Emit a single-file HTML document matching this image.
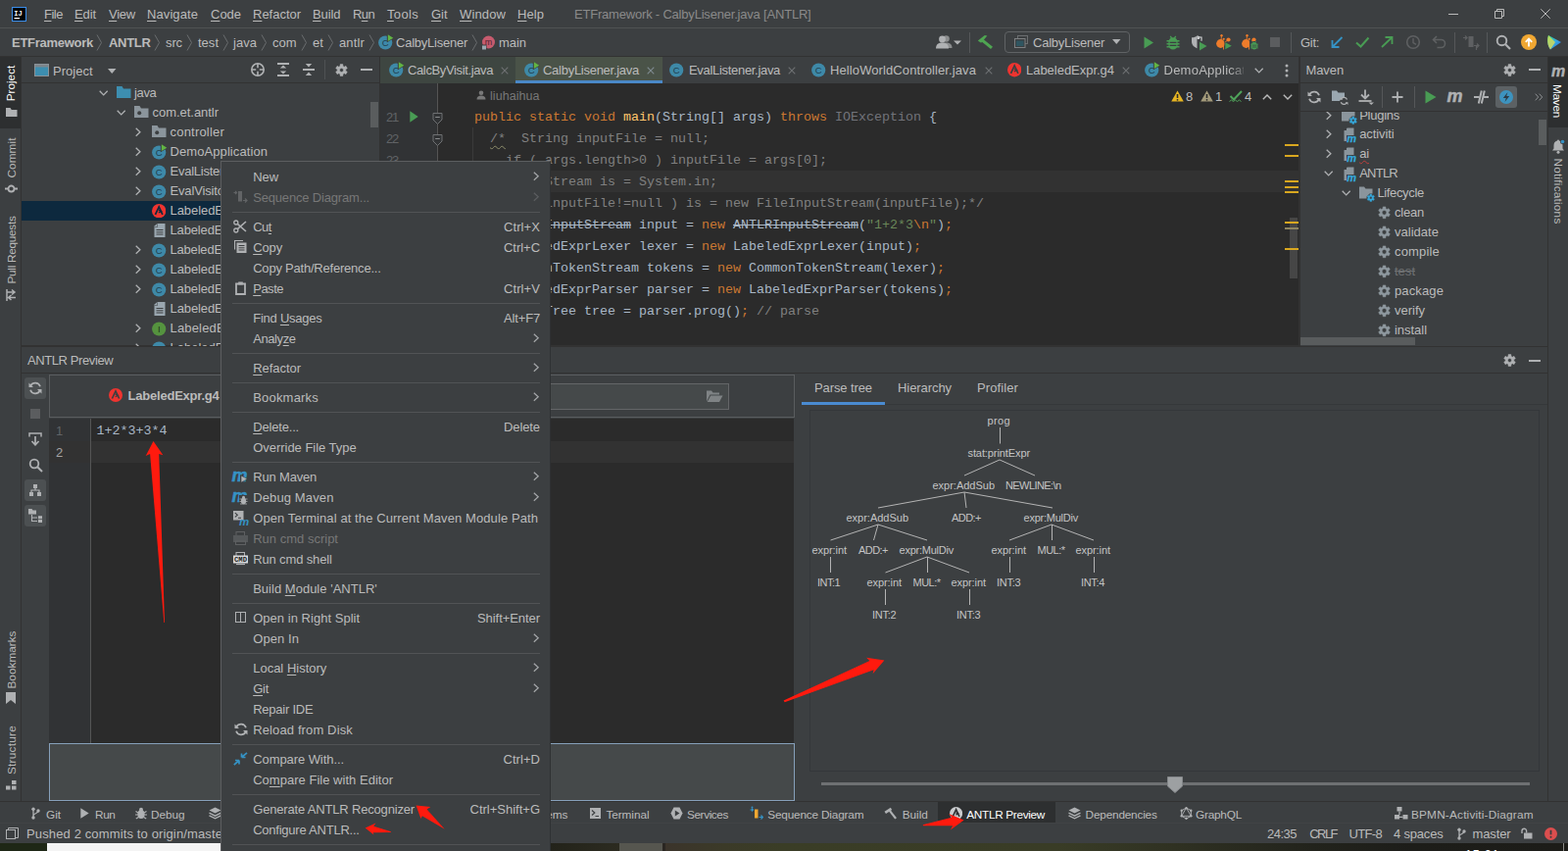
<!DOCTYPE html>
<html><head><meta charset="utf-8"><title>ETFramework - CalbyLisener.java [ANTLR]</title>
<style>
html,body{margin:0;padding:0;}
body{width:1600px;height:868px;overflow:hidden;position:relative;background:#3c3f41;font-family:"Liberation Sans",sans-serif;font-size:13px;color:#bbb;}
body div,body span,body svg{position:absolute;display:block;}
body span{white-space:pre;line-height:20px;height:20px;}
body span u{text-decoration:underline;text-underline-offset:2px;text-decoration-thickness:1px;}
body span s{text-decoration:line-through;}
body span i{font-style:normal;position:static;}
</style></head><body>
<div style="left:0px;top:0px;width:1600px;height:860px;background:#3c3f41;"></div>
<div style="left:0px;top:860px;width:1600px;height:8px;background:#2a2d22;"></div>
<div style="left:96px;top:862px;width:358px;height:6px;background:#f2f2f2;"></div>
<div style="left:454px;top:862px;width:1146px;height:6px;background:#3a3b30;"></div>
<div style="left:0px;top:28px;width:1600px;height:1px;background:#505253;"></div>
<div style="left:0px;top:57px;width:1600px;height:1px;background:#323232;"></div>
<div style="left:0px;top:58px;width:22px;height:759px;background:#3c3f41;"></div>
<div style="left:0px;top:58px;width:22px;height:73px;background:#2d2f30;"></div>
<div style="left:21px;top:58px;width:1px;height:759px;background:#323232;"></div>
<div style="left:1578px;top:58px;width:1px;height:759px;background:#323232;"></div>
<div style="left:1579px;top:58px;width:21px;height:64px;background:#2d2f30;"></div>
<div style="left:387px;top:58px;width:1px;height:295px;background:#323232;"></div>
<div style="left:1325px;top:58px;width:2px;height:295px;background:#323232;"></div>
<div style="left:22px;top:84px;width:366px;height:1px;background:#323232;"></div>
<div style="left:1327px;top:84px;width:251px;height:1px;background:#323232;"></div>
<div style="left:388px;top:58px;width:937px;height:27px;background:#3c3f41;"></div>
<div style="left:388px;top:85px;width:937px;height:268px;background:#2b2b2b;"></div>
<div style="left:388px;top:85px;width:59px;height:268px;background:#313335;"></div>
<div style="left:446px;top:85px;width:1px;height:268px;background:#555555;"></div>
<div style="left:22px;top:352px;width:1557px;height:1px;background:#323232;"></div>
<svg style="left:12px;top:7px;" width="15" height="15" viewBox="0 0 15 15"><rect x="0.5" y="0.5" width="14" height="14" fill="#000" stroke="#3b8eea" stroke-width="1"/><text x="2.2" y="8.8" font-size="7.5" font-weight="bold" fill="#fff" font-family="Liberation Mono,monospace" textLength="8.5" lengthAdjust="spacingAndGlyphs">IJ</text><rect x="2.5" y="11" width="5.5" height="1.3" fill="#fff"/></svg>
<span style="left:45px;top:4.5px;font-size:13px;color:#bbb;letter-spacing:-0.487px;"><u>F</u>ile</span>
<span style="left:76px;top:4.5px;font-size:13px;color:#bbb;letter-spacing:-0.100px;"><u>E</u>dit</span>
<span style="left:111px;top:4.5px;font-size:13px;color:#bbb;letter-spacing:-0.235px;"><u>V</u>iew</span>
<span style="left:150px;top:4.5px;font-size:13px;color:#bbb;letter-spacing:0.087px;"><u>N</u>avigate</span>
<span style="left:215px;top:4.5px;font-size:13px;color:#bbb;letter-spacing:-0.019px;"><u>C</u>ode</span>
<span style="left:258px;top:4.5px;font-size:13px;color:#bbb;letter-spacing:-0.016px;"><u>R</u>efactor</span>
<span style="left:319px;top:4.5px;font-size:13px;color:#bbb;letter-spacing:-0.081px;"><u>B</u>uild</span>
<span style="left:360px;top:4.5px;font-size:13px;color:#bbb;letter-spacing:-0.616px;">R<u>u</u>n</span>
<span style="left:395px;top:4.5px;font-size:13px;color:#bbb;letter-spacing:0.331px;"><u>T</u>ools</span>
<span style="left:440px;top:4.5px;font-size:13px;color:#bbb;letter-spacing:-0.037px;"><u>G</u>it</span>
<span style="left:469px;top:4.5px;font-size:13px;color:#bbb;letter-spacing:0.127px;"><u>W</u>indow</span>
<span style="left:528px;top:4.5px;font-size:13px;color:#bbb;letter-spacing:0.066px;"><u>H</u>elp</span>
<span style="left:586px;top:4.5px;font-size:13px;color:#8a8a8a;letter-spacing:-0.198px;">ETFramework - CalbyLisener.java [ANTLR]</span>
<div style="left:1478px;top:14px;width:10px;height:1px;background:#bbb;"></div>
<svg style="left:1525px;top:9px;" width="10" height="10" viewBox="0 0 10 10"><path d="M0.5 2.5h7v7h-7z M2.5 2.5v-2h7v7h-2" fill="none" stroke="#bbb" stroke-width="1"/></svg>
<svg style="left:1572px;top:9px;" width="10" height="10" viewBox="0 0 10 10"><path d="M0.3 0.3l9.400 9.400M9.700 0.300l-9.400 9.400" fill="none" stroke="#bbb" stroke-width="1"/></svg>
<span style="left:12px;top:33.5px;font-size:13px;color:#bbb;font-weight:bold;letter-spacing:-0.270px;">ETFramework</span>
<span style="left:111px;top:33.5px;font-size:13px;color:#bbb;font-weight:bold;letter-spacing:-0.309px;">ANTLR</span>
<span style="left:169px;top:33.5px;font-size:13px;color:#bbb;letter-spacing:-0.110px;">src</span>
<span style="left:202px;top:33.5px;font-size:13px;color:#bbb;letter-spacing:0.012px;">test</span>
<span style="left:238px;top:33.5px;font-size:13px;color:#bbb;letter-spacing:0.038px;">java</span>
<span style="left:278px;top:33.5px;font-size:13px;color:#bbb;letter-spacing:-0.019px;">com</span>
<span style="left:319px;top:33.5px;font-size:13px;color:#bbb;letter-spacing:0.080px;">et</span>
<span style="left:346px;top:33.5px;font-size:13px;color:#bbb;letter-spacing:0.143px;">antlr</span>
<svg style="left:98px;top:34px;" width="7" height="19" viewBox="0 0 7 19"><path d="M1 1.5L5.5 9.5L1 17.5" fill="none" stroke="#6a6d6f" stroke-width="1"/></svg>
<svg style="left:157px;top:34px;" width="7" height="19" viewBox="0 0 7 19"><path d="M1 1.5L5.5 9.5L1 17.5" fill="none" stroke="#6a6d6f" stroke-width="1"/></svg>
<svg style="left:190px;top:34px;" width="7" height="19" viewBox="0 0 7 19"><path d="M1 1.5L5.5 9.5L1 17.5" fill="none" stroke="#6a6d6f" stroke-width="1"/></svg>
<svg style="left:227px;top:34px;" width="7" height="19" viewBox="0 0 7 19"><path d="M1 1.5L5.5 9.5L1 17.5" fill="none" stroke="#6a6d6f" stroke-width="1"/></svg>
<svg style="left:266px;top:34px;" width="7" height="19" viewBox="0 0 7 19"><path d="M1 1.5L5.5 9.5L1 17.5" fill="none" stroke="#6a6d6f" stroke-width="1"/></svg>
<svg style="left:307px;top:34px;" width="7" height="19" viewBox="0 0 7 19"><path d="M1 1.5L5.5 9.5L1 17.5" fill="none" stroke="#6a6d6f" stroke-width="1"/></svg>
<svg style="left:334px;top:34px;" width="7" height="19" viewBox="0 0 7 19"><path d="M1 1.5L5.5 9.5L1 17.5" fill="none" stroke="#6a6d6f" stroke-width="1"/></svg>
<svg style="left:376px;top:34px;" width="7" height="19" viewBox="0 0 7 19"><path d="M1 1.5L5.5 9.5L1 17.5" fill="none" stroke="#6a6d6f" stroke-width="1"/></svg>
<svg style="left:481px;top:34px;" width="7" height="19" viewBox="0 0 7 19"><path d="M1 1.5L5.5 9.5L1 17.5" fill="none" stroke="#6a6d6f" stroke-width="1"/></svg>
<svg style="left:385.8px;top:35px;" width="16" height="16" viewBox="0 0 16 16"><circle cx="7.200" cy="8.500" r="7.100" fill="#3e89a8"/><text x="7.200" y="11.700" font-size="9.500" text-anchor="middle" fill="#21404f" font-family="Liberation Sans,sans-serif">C</text><path d="M8.800 0L16 4L8.800 8.200z" fill="#3c3f41"/><path d="M9.800 0.300L15.300 3.700L9.800 7z" fill="#62b543"/></svg>
<span style="left:404px;top:33.5px;font-size:13px;color:#bbb;letter-spacing:-0.239px;">CalbyLisener</span>
<svg style="left:491px;top:36px;" width="15" height="15" viewBox="0 0 15 15"><circle cx="7.5" cy="7" r="6.5" fill="#c75b6e"/><text x="7.5" y="10" font-size="9" text-anchor="middle" fill="#4e2530" font-family="Liberation Sans,sans-serif">m</text><rect x="0" y="9.5" width="5.5" height="5.5" fill="#3c3f41"/><rect x="1" y="10.5" width="4" height="4" fill="#9aa7b0"/></svg>
<span style="left:509px;top:33.5px;font-size:13px;color:#bbb;letter-spacing:-0.044px;">main</span>
<svg style="left:955px;top:35px;" width="28" height="16" viewBox="0 0 28 16"><circle cx="10.5" cy="4.5" r="3.3" fill="#8b8d8e"/><path d="M4.5 14c0-4 2.5-5.5 6-5.5s6 1.500 6 5.5z" fill="#8b8d8e"/><circle cx="6.500" cy="5" r="3.400" fill="#afb1b3"/><path d="M0 14.500c0-4.500 3-6 6.500-6s6.500 1.500 6.500 6z" fill="#afb1b3"/><path d="M18 6.500h8l-4 4z" fill="#afb1b3"/></svg>
<div style="left:989px;top:33px;width:1px;height:21px;background:#555759;"></div>
<svg style="left:997px;top:35px;" width="18" height="17" viewBox="0 0 18 17"><path d="M0.800 6.600L7.800 1L10.400 1.600L4.100 8.750z" fill="#4fa552"/><path d="M5.500 4.250L16 12.700L14 15L4.100 7z" fill="#4fa552"/></svg>
<div style="left:1025px;top:32px;width:126px;height:20px;border:1px solid #606365;border-radius:4px;"></div>
<svg style="left:1035px;top:36px;" width="14" height="13" viewBox="0 0 14 13"><rect x="3.500" y="0.500" width="10" height="8" fill="none" stroke="#6b6e70"/><rect x="0.500" y="3.500" width="10.500" height="9" fill="#3c3f41" stroke="#7d8082"/><rect x="2" y="5.500" width="7.500" height="5.500" fill="#2f5560"/></svg>
<span style="left:1054px;top:33.5px;font-size:13px;color:#bbb;letter-spacing:-0.239px;">CalbyLisener</span>
<svg style="left:1135px;top:40px;" width="9" height="6" viewBox="0 0 9 6"><path d="M0 0h8.500l-4.250 5z" fill="#afb1b3"/></svg>
<svg style="left:1166.5px;top:36.5px;" width="11" height="13" viewBox="0 0 11 13"><path d="M0.500 0.500L10 6.500L0.500 12.500z" fill="#499c54"/></svg>
<svg style="left:1190px;top:35.5px;" width="14" height="16" viewBox="0 0 14 16"><g transform="translate(0,0) scale(1.0)"><path d="M4.200 1L5.800 3.200M9.800 1L8.200 3.200" stroke="#499c54" stroke-width="1.300" fill="none"/><path d="M0.500 5.800h13M0.500 8.800h13M0.500 11.800h13" stroke="#499c54" stroke-width="1.400" fill="none"/><path d="M7 2.200c3 0 4.600 2 4.600 5v2.500c0 3-2 4.800-4.600 4.800s-4.600-1.800-4.600-4.800v-2.500c0-3 1.600-5 4.600-5z" fill="#499c54"/><path d="M3.600 7.300h6.800M3.600 10.300h6.800" stroke="#3c3f41" stroke-width="1.200" fill="none"/></g></svg>
<svg style="left:1215px;top:36px;" width="18" height="17" viewBox="0 0 18 17"><path d="M1 2.200c2.500 0 4.200-0.600 5.500-1.500v12.500c-3-1.200-5.500-3.300-5.500-6.700z" fill="#b0b2b4"/><path d="M6.500 0.700c1.300 0.900 3 1.500 4.500 1.500v3.500" fill="none" stroke="#c8cacc" stroke-width="1.200"/><path d="M6.500 0.700v3.300h2.500v-2.300z" fill="#c8cacc"/><path d="M9 6.800L16.500 11L9 15.500z" fill="#499c54"/></svg>
<svg style="left:1240px;top:34px;" width="18" height="18" viewBox="0 0 18 18"><circle cx="5.500" cy="10.500" r="4.400" fill="#ee7c2b"/><circle cx="13.500" cy="6.500" r="2.100" fill="#ee7c2b"/><circle cx="8.700" cy="5.800" r="1.100" fill="#ee7c2b"/><circle cx="6.500" cy="2.300" r="1.200" fill="#ee7c2b"/><path d="M6.500 2.300L6 7M8.500 13v3.500M13.500 6.500L10 9" stroke="#ee7c2b" stroke-width="0.900" fill="none"/><path d="M9.500 8.300L17.500 12.600L9.500 17z" fill="#3c3f41"/><path d="M10.300 9.300L16.800 12.700L10.300 16.200z" fill="#499c54"/></svg>
<svg style="left:1266px;top:34px;" width="18" height="18" viewBox="0 0 18 18"><circle cx="5.500" cy="10.500" r="4.400" fill="#ee7c2b"/><circle cx="13.500" cy="6.500" r="2.100" fill="#ee7c2b"/><circle cx="8.700" cy="5.800" r="1.100" fill="#ee7c2b"/><circle cx="6.500" cy="2.300" r="1.200" fill="#ee7c2b"/><path d="M6.500 2.300L6 7M8.500 13v3.500M13.500 6.500L10 9" stroke="#ee7c2b" stroke-width="0.900" fill="none"/><rect x="9" y="8" width="9" height="10" fill="#3c3f41"/><g transform="translate(9.5,7.6) scale(0.62)"><path d="M4.200 1L5.800 3.200M9.800 1L8.200 3.200" stroke="#499c54" stroke-width="1.300" fill="none"/><path d="M0.500 5.800h13M0.500 8.800h13M0.500 11.800h13" stroke="#499c54" stroke-width="1.400" fill="none"/><path d="M7 2.200c3 0 4.600 2 4.600 5v2.500c0 3-2 4.800-4.600 4.800s-4.600-1.800-4.600-4.800v-2.500c0-3 1.600-5 4.600-5z" fill="#499c54"/><path d="M3.600 7.300h6.800M3.600 10.300h6.800" stroke="#3c3f41" stroke-width="1.200" fill="none"/></g></svg>
<div style="left:1296px;top:38px;width:10px;height:10px;background:#5b5d5f;"></div>
<div style="left:1317px;top:33px;width:1px;height:21px;background:#555759;"></div>
<span style="left:1327px;top:33.5px;font-size:13px;color:#bbb;letter-spacing:-0.306px;">Git:</span>
<svg style="left:1358px;top:37px;" width="13" height="12" viewBox="0 0 13 12"><path d="M11.500 1L2 10.500M1.500 4v7h7" fill="none" stroke="#3592c4" stroke-width="1.800"/></svg>
<svg style="left:1383px;top:37px;" width="15" height="12" viewBox="0 0 15 12"><path d="M1 6.500L5.500 10.500L13.500 1.500" fill="none" stroke="#499c54" stroke-width="2"/></svg>
<svg style="left:1409px;top:37px;" width="13" height="12" viewBox="0 0 13 12"><path d="M1 11L11 1.500M4.500 1h7v7" fill="none" stroke="#499c54" stroke-width="1.800"/></svg>
<svg style="left:1434px;top:35px;" width="16" height="16" viewBox="0 0 16 16"><circle cx="8" cy="8" r="6.300" fill="none" stroke="#5e6062" stroke-width="1.600"/><path d="M8 4v4.500l3 1.800" fill="none" stroke="#5e6062" stroke-width="1.400"/></svg>
<svg style="left:1461px;top:36px;" width="15" height="14" viewBox="0 0 15 14"><path d="M5 1L1.500 4.500L5 8M2 4.500h7.500a4 4 0 0 1 0 8h-4" fill="none" stroke="#5e6062" stroke-width="1.600"/></svg>
<div style="left:1484px;top:33px;width:1px;height:21px;background:#555759;"></div>
<svg style="left:1493px;top:35px;" width="18" height="17" viewBox="0 0 18 17"><rect x="5.500" y="2" width="5" height="11" fill="#5e6062"/><path d="M0 3.500h3.500M2 1.500l2 2l-2 2M11 11.500h5M14 9.500l2 2l-2 2M13.500 12v4" stroke="#5e6062" stroke-width="1.200" fill="none"/></svg>
<div style="left:1517px;top:33px;width:1px;height:21px;background:#555759;"></div>
<svg style="left:1526px;top:35px;" width="16" height="16" viewBox="0 0 16 16"><circle cx="6.500" cy="6.500" r="4.800" fill="none" stroke="#afb1b3" stroke-width="1.900"/><path d="M10 10l5 5" stroke="#afb1b3" stroke-width="2.200"/></svg>
<svg style="left:1552px;top:35px;" width="16" height="16" viewBox="0 0 16 16"><circle cx="8" cy="8" r="8" fill="#f0a732"/><path d="M8 12.500V5M4.800 7.800L8 4.500l3.200 3.300" fill="none" stroke="#fff" stroke-width="1.800"/></svg>
<svg style="left:1578px;top:35px;" width="16" height="16" viewBox="0 0 16 16"><defs><linearGradient id="sp" x1="0" y1="0" x2="1" y2="1"><stop offset="0" stop-color="#21d789"/><stop offset="0.500" stop-color="#36a9e0"/><stop offset="1" stop-color="#2b6be0"/></linearGradient></defs><path d="M2 1L15 8L4 15.500C1 12 0.500 5 2 1z" fill="url(#sp)"/><path d="M2 1L9 8L4 15.500C1 12 0.500 5 2 1z" fill="#e7e04a" opacity=".75"/></svg>
<span style="left:-6.75px;top:75.25px;width:36.5px;text-align:center;font-size:11.8px;color:#ffffff;letter-spacing:-0.032px;transform:rotate(-90deg);">Project</span>
<svg style="left:6px;top:110px;" width="12" height="9" viewBox="0 0 12 9"><path d="M0 0h4.500l1.300 2h5.700v7h-11.500z" fill="#afb1b3"/></svg>
<span style="left:-9.0px;top:150.5px;width:41px;text-align:center;font-size:11.8px;color:#bbb;letter-spacing:0.060px;transform:rotate(-90deg);">Commit</span>
<svg style="left:4px;top:186px;transform:rotate(90deg);" width="15" height="13" viewBox="0 0 15 13"><circle cx="7.500" cy="6.500" r="3" fill="none" stroke="#afb1b3" stroke-width="1.800"/><path d="M7.500 0v3.500M7.500 9.500v3.500" stroke="#afb1b3" stroke-width="1.800"/></svg>
<span style="left:-23.0px;top:244.5px;width:69px;text-align:center;font-size:11.8px;color:#bbb;letter-spacing:-0.292px;transform:rotate(-90deg);">Pull Requests</span>
<svg style="left:5px;top:293.5px;" width="13" height="14" viewBox="0 0 13 14"><path d="M2 1v12M2 4h8M7 1.500l3 2.500l-3 2.500M11 9.500h-7M6.500 7l-3 2.500l3 2.500" fill="none" stroke="#afb1b3" stroke-width="1.500"/></svg>
<span style="left:-18.0px;top:662.5px;width:59px;text-align:center;font-size:11.8px;color:#bbb;letter-spacing:-0.002px;transform:rotate(-90deg);">Bookmarks</span>
<svg style="left:6px;top:706px;" width="10" height="12" viewBox="0 0 10 12"><path d="M0 0h10v12l-5-4l-5 4z" fill="#afb1b3"/></svg>
<span style="left:-13.5px;top:755.0px;width:50px;text-align:center;font-size:11.8px;color:#bbb;letter-spacing:0.237px;transform:rotate(-90deg);">Structure</span>
<svg style="left:6px;top:795.5px;" width="11" height="10" viewBox="0 0 11 10"><rect x="6" y="0" width="4.500" height="4" fill="#afb1b3"/><rect x="0" y="5.500" width="4.500" height="4" fill="#afb1b3"/><rect x="6" y="5.500" width="4.500" height="4" fill="#afb1b3"/></svg>
<svg style="left:35px;top:65px;" width="15" height="13" viewBox="0 0 15 13"><rect x="0.500" y="0.500" width="14" height="12" fill="#3d8eb0" stroke="#8a9298" stroke-width="1"/><rect x="1" y="1" width="13" height="2.500" fill="#7d858b"/></svg>
<span style="left:54px;top:62.5px;font-size:13px;color:#bbb;letter-spacing:0.006px;">Project</span>
<svg style="left:110px;top:70px;" width="9" height="6" viewBox="0 0 9 6"><path d="M0 0h8.500l-4.250 5z" fill="#afb1b3"/></svg>
<svg style="left:256px;top:64px;" width="15" height="15" viewBox="0 0 15 15"><circle cx="7" cy="7" r="6.200" fill="none" stroke="#afb1b3" stroke-width="1.600"/><path d="M7 0.800v4.400M7 8.800v4.400M0.800 7h4.400M8.800 7h4.400" stroke="#afb1b3" stroke-width="1.600"/></svg>
<svg style="left:283px;top:64px;" width="12" height="14" viewBox="0 0 12 14"><path d="M0 1h12M0 13h12" stroke="#afb1b3" stroke-width="2"/><path d="M6 2.600L9.200 5.600H2.800zM6 11.400L9.200 8.400H2.800z" fill="#afb1b3"/></svg>
<svg style="left:309px;top:64px;" width="12" height="14" viewBox="0 0 12 14"><path d="M0 7h12" stroke="#afb1b3" stroke-width="2"/><path d="M6 4.400L9.200 1H2.800zM6 9.600L9.200 13H2.800z" fill="#afb1b3"/></svg>
<div style="left:331px;top:61px;width:1px;height:20px;background:#4f5153;"></div>
<svg style="left:341.5px;top:64.5px;" width="13" height="13" viewBox="0 0 15 15"><path d="M5.79 2.80L5.93 0.68L9.07 0.68L9.21 2.80L10.71 3.67L12.62 2.73L14.19 5.45L12.42 6.63L12.42 8.37L14.19 9.55L12.62 12.27L10.71 11.33L9.21 12.20L9.07 14.32L5.93 14.32L5.79 12.20L4.29 11.33L2.38 12.27L0.81 9.55L2.58 8.37L2.58 6.63L0.81 5.45L2.38 2.73L4.29 3.67z M5.20 7.50a2.3 2.3 0 1 0 4.6 0a2.3 2.3 0 1 0 -4.6 0z" fill="#afb1b3" fill-rule="evenodd" stroke="#afb1b3" stroke-width="0.6" stroke-linejoin="round"/></svg>
<div style="left:368px;top:70px;width:12px;height:2px;background:#afb1b3;"></div>
<div style="left:22px;top:205px;width:365px;height:20px;background:#0d293e;"></div>
<svg style="left:100.8px;top:91.75px;" width="10" height="6" viewBox="0 0 10 6"><path d="M0.700 0.700L4.700 4.900L8.700 0.700" fill="none" stroke="#afb1b3" stroke-width="1.300"/></svg>
<svg style="left:119px;top:88px;" width="15" height="12" viewBox="0 0 15 12"><path d="M0 0h5.500l1.500 2.500h7.500v9.500h-14.500z" fill="#3d8eb0"/></svg>
<span style="left:137px;top:85.0px;font-size:13px;color:#bbb;letter-spacing:-0.337px;">java</span>
<svg style="left:118.8px;top:111.75px;" width="10" height="6" viewBox="0 0 10 6"><path d="M0.700 0.700L4.700 4.900L8.700 0.700" fill="none" stroke="#afb1b3" stroke-width="1.300"/></svg>
<svg style="left:137px;top:108px;" width="15" height="12" viewBox="0 0 15 12"><path d="M0 0h5.500l1.500 2.500h7.500v9.500h-14.500z" fill="#8b959c"/><circle cx="5.200" cy="7.300" r="2" fill="#3c3f41"/></svg>
<span style="left:155.5px;top:105.0px;font-size:13px;color:#bbb;letter-spacing:-0.034px;">com.et.antlr</span>
<svg style="left:138.25px;top:129.8px;" width="6" height="10" viewBox="0 0 6 10"><path d="M0.700 0.700L4.900 4.700L0.700 8.700" fill="none" stroke="#afb1b3" stroke-width="1.300"/></svg>
<svg style="left:155px;top:128px;" width="15" height="12" viewBox="0 0 15 12"><path d="M0 0h5.500l1.500 2.500h7.500v9.500h-14.500z" fill="#8b959c"/><circle cx="5.200" cy="7.300" r="2" fill="#3c3f41"/></svg>
<span style="left:173.5px;top:125.0px;font-size:13px;color:#bbb;letter-spacing:0.204px;">controller</span>
<svg style="left:138.25px;top:149.8px;" width="6" height="10" viewBox="0 0 6 10"><path d="M0.700 0.700L4.900 4.700L0.700 8.700" fill="none" stroke="#afb1b3" stroke-width="1.300"/></svg>
<svg style="left:154.8px;top:146.5px;" width="16" height="16" viewBox="0 0 16 16"><circle cx="7.200" cy="8.500" r="7.100" fill="#3e89a8"/><text x="7.200" y="11.700" font-size="9.500" text-anchor="middle" fill="#21404f" font-family="Liberation Sans,sans-serif">C</text><path d="M8.800 0L16 4L8.800 8.200z" fill="#3c3f41"/><path d="M9.800 0.300L15.300 3.700L9.800 7z" fill="#62b543"/></svg>
<span style="left:173.5px;top:145.0px;font-size:13px;color:#bbb;letter-spacing:0.082px;">DemoApplication</span>
<svg style="left:138.25px;top:169.8px;" width="6" height="10" viewBox="0 0 6 10"><path d="M0.700 0.700L4.900 4.700L0.700 8.700" fill="none" stroke="#afb1b3" stroke-width="1.300"/></svg>
<svg style="left:154.8px;top:166.5px;" width="16" height="16" viewBox="0 0 16 16"><circle cx="7.200" cy="8.500" r="7.100" fill="#3e89a8"/><text x="7.200" y="11.700" font-size="9.500" text-anchor="middle" fill="#21404f" font-family="Liberation Sans,sans-serif">C</text></svg>
<span style="left:173.5px;top:165.0px;font-size:13px;color:#bbb;letter-spacing:-0.253px;">EvalListener</span>
<svg style="left:138.25px;top:189.8px;" width="6" height="10" viewBox="0 0 6 10"><path d="M0.700 0.700L4.900 4.700L0.700 8.700" fill="none" stroke="#afb1b3" stroke-width="1.300"/></svg>
<svg style="left:154.8px;top:186.5px;" width="16" height="16" viewBox="0 0 16 16"><circle cx="7.200" cy="8.500" r="7.100" fill="#3e89a8"/><text x="7.200" y="11.700" font-size="9.500" text-anchor="middle" fill="#21404f" font-family="Liberation Sans,sans-serif">C</text></svg>
<span style="left:173.5px;top:185.0px;font-size:13px;color:#bbb;letter-spacing:-0.152px;">EvalVisitor</span>
<svg style="left:154.7px;top:207.9px;" width="14.4" height="14.4" viewBox="0 0 14.4 14.4"><circle cx="7.2" cy="7.2" r="7.2" fill="#ee3430"/><path d="M3.50 10.80L7.20 2.90L10.90 10.80" fill="none" stroke="#0d293e" stroke-width="1.70" stroke-linejoin="miter"/><path d="M6.90 6.30L9.50 7.50L6.90 9.00" fill="none" stroke="#0d293e" stroke-width="1.30"/></svg>
<span style="left:173.5px;top:205.0px;font-size:13px;color:#bbb;letter-spacing:-0.060px;">LabeledExpr.g4</span>
<svg style="left:157px;top:227.5px;" width="12" height="14" viewBox="0 0 12 14"><path d="M4 0h7.500v14h-11v-10.500z" fill="#9aa7b0"/><path d="M0.500 3.500L4 0v3.500z" fill="#3c3f41"/><path d="M0 3L3.500 0v3z" fill="#9aa7b0"/><path d="M2.500 6.500h7M2.500 8.800h7M2.500 11h7" stroke="#3c3f41" stroke-width="1"/></svg>
<span style="left:173.5px;top:225.0px;font-size:13px;color:#bbb;letter-spacing:-0.149px;">LabeledExpr.tokens</span>
<svg style="left:138.25px;top:249.8px;" width="6" height="10" viewBox="0 0 6 10"><path d="M0.700 0.700L4.900 4.700L0.700 8.700" fill="none" stroke="#afb1b3" stroke-width="1.300"/></svg>
<svg style="left:154.8px;top:246.5px;" width="16" height="16" viewBox="0 0 16 16"><circle cx="7.200" cy="8.500" r="7.100" fill="#3e89a8"/><text x="7.200" y="11.700" font-size="9.500" text-anchor="middle" fill="#21404f" font-family="Liberation Sans,sans-serif">C</text></svg>
<span style="left:173.5px;top:245.0px;font-size:13px;color:#bbb;letter-spacing:-0.190px;">LabeledExprBaseListener</span>
<svg style="left:138.25px;top:269.8px;" width="6" height="10" viewBox="0 0 6 10"><path d="M0.700 0.700L4.900 4.700L0.700 8.700" fill="none" stroke="#afb1b3" stroke-width="1.300"/></svg>
<svg style="left:154.8px;top:266.5px;" width="16" height="16" viewBox="0 0 16 16"><circle cx="7.200" cy="8.500" r="7.100" fill="#3e89a8"/><text x="7.200" y="11.700" font-size="9.500" text-anchor="middle" fill="#21404f" font-family="Liberation Sans,sans-serif">C</text></svg>
<span style="left:173.5px;top:265.0px;font-size:13px;color:#bbb;letter-spacing:-0.091px;">LabeledExprBaseVisitor</span>
<svg style="left:138.25px;top:289.8px;" width="6" height="10" viewBox="0 0 6 10"><path d="M0.700 0.700L4.900 4.700L0.700 8.700" fill="none" stroke="#afb1b3" stroke-width="1.300"/></svg>
<svg style="left:154.8px;top:286.5px;" width="16" height="16" viewBox="0 0 16 16"><circle cx="7.200" cy="8.500" r="7.100" fill="#3e89a8"/><text x="7.200" y="11.700" font-size="9.500" text-anchor="middle" fill="#21404f" font-family="Liberation Sans,sans-serif">C</text></svg>
<span style="left:173.5px;top:285.0px;font-size:13px;color:#bbb;letter-spacing:-0.126px;">LabeledExprLexer</span>
<svg style="left:157px;top:307.5px;" width="12" height="14" viewBox="0 0 12 14"><path d="M4 0h7.500v14h-11v-10.500z" fill="#9aa7b0"/><path d="M0.500 3.500L4 0v3.500z" fill="#3c3f41"/><path d="M0 3L3.500 0v3z" fill="#9aa7b0"/><path d="M2.500 6.500h7M2.500 8.800h7M2.500 11h7" stroke="#3c3f41" stroke-width="1"/></svg>
<span style="left:173.5px;top:305.0px;font-size:13px;color:#bbb;letter-spacing:-0.096px;">LabeledExprLexer.tokens</span>
<svg style="left:138.25px;top:329.8px;" width="6" height="10" viewBox="0 0 6 10"><path d="M0.700 0.700L4.900 4.700L0.700 8.700" fill="none" stroke="#afb1b3" stroke-width="1.300"/></svg>
<svg style="left:154.8px;top:326.5px;" width="16" height="16" viewBox="0 0 16 16"><circle cx="7.200" cy="8.500" r="7.100" fill="#55933f"/><text x="7.200" y="11.700" font-size="9.500" text-anchor="middle" fill="#21381a" font-family="Liberation Sans,sans-serif">I</text></svg>
<span style="left:173.5px;top:325.0px;font-size:13px;color:#bbb;letter-spacing:0.172px;">LabeledExprListener</span>
<svg style="left:138.25px;top:349.8px;" width="6" height="10" viewBox="0 0 6 10"><path d="M0.700 0.700L4.900 4.700L0.700 8.700" fill="none" stroke="#afb1b3" stroke-width="1.300"/></svg>
<svg style="left:154.8px;top:346.5px;" width="16" height="16" viewBox="0 0 16 16"><circle cx="7.200" cy="8.500" r="7.100" fill="#3e89a8"/><text x="7.200" y="11.700" font-size="9.500" text-anchor="middle" fill="#21404f" font-family="Liberation Sans,sans-serif">C</text></svg>
<span style="left:173.5px;top:345.0px;font-size:13px;color:#bbb;letter-spacing:0.013px;">LabeledExprParser</span>
<div style="left:378px;top:104px;width:8px;height:26px;background:#5a5d5e;"></div>
<div style="left:388px;top:58px;width:937px;height:27px;background:#3c3f41;"></div>
<div style="left:388px;top:58px;width:138px;height:27px;background:#3e4641;"></div>
<div style="left:526px;top:58px;width:150px;height:27px;background:#4a5348;"></div>
<div style="left:526px;top:82px;width:150px;height:3px;background:#4a88c7;"></div>
<svg style="left:396.8px;top:63px;" width="16" height="16" viewBox="0 0 16 16"><circle cx="7.200" cy="8.500" r="7.100" fill="#3e89a8"/><text x="7.200" y="11.700" font-size="9.500" text-anchor="middle" fill="#21404f" font-family="Liberation Sans,sans-serif">C</text><path d="M8.800 0L16 4L8.800 8.200z" fill="#3c3f41"/><path d="M9.800 0.300L15.300 3.700L9.800 7z" fill="#62b543"/></svg>
<span style="left:416px;top:62.0px;font-size:13px;color:#bbb;letter-spacing:-0.373px;">CalcByVisit.java</span>
<svg style="left:511px;top:68px;" width="8" height="8" viewBox="0 0 8 8"><path d="M0.700 0.700l6.600 6.600M7.300 0.700l-6.600 6.600" stroke="#6e7173" stroke-width="1.100" fill="none"/></svg>
<svg style="left:534.8px;top:63px;" width="16" height="16" viewBox="0 0 16 16"><circle cx="7.200" cy="8.500" r="7.100" fill="#3e89a8"/><text x="7.200" y="11.700" font-size="9.500" text-anchor="middle" fill="#21404f" font-family="Liberation Sans,sans-serif">C</text><path d="M8.800 0L16 4L8.800 8.200z" fill="#3c3f41"/><path d="M9.800 0.300L15.300 3.700L9.800 7z" fill="#62b543"/></svg>
<span style="left:554px;top:62.0px;font-size:13px;color:#bbb;letter-spacing:-0.271px;">CalbyLisener.java</span>
<svg style="left:660px;top:68px;" width="8" height="8" viewBox="0 0 8 8"><path d="M0.700 0.700l6.600 6.600M7.300 0.700l-6.600 6.600" stroke="#7f8b91" stroke-width="1.100" fill="none"/></svg>
<svg style="left:682.8px;top:63px;" width="16" height="16" viewBox="0 0 16 16"><circle cx="7.200" cy="8.500" r="7.100" fill="#3e89a8"/><text x="7.200" y="11.700" font-size="9.500" text-anchor="middle" fill="#21404f" font-family="Liberation Sans,sans-serif">C</text></svg>
<span style="left:703px;top:62.0px;font-size:13px;color:#bbb;letter-spacing:-0.310px;">EvalListener.java</span>
<svg style="left:804px;top:68px;" width="8" height="8" viewBox="0 0 8 8"><path d="M0.700 0.700l6.600 6.600M7.300 0.700l-6.600 6.600" stroke="#6e7173" stroke-width="1.100" fill="none"/></svg>
<svg style="left:827.8px;top:63px;" width="16" height="16" viewBox="0 0 16 16"><circle cx="7.200" cy="8.500" r="7.100" fill="#3e89a8"/><text x="7.200" y="11.700" font-size="9.500" text-anchor="middle" fill="#21404f" font-family="Liberation Sans,sans-serif">C</text></svg>
<span style="left:847px;top:62.0px;font-size:13px;color:#bbb;letter-spacing:0.103px;">HelloWorldController.java</span>
<svg style="left:1005px;top:68px;" width="8" height="8" viewBox="0 0 8 8"><path d="M0.700 0.700l6.600 6.600M7.300 0.700l-6.600 6.600" stroke="#6e7173" stroke-width="1.100" fill="none"/></svg>
<svg style="left:1027.5px;top:64.3px;" width="14.4" height="14.4" viewBox="0 0 14.4 14.4"><circle cx="7.2" cy="7.2" r="7.2" fill="#ee3430"/><path d="M3.50 10.80L7.20 2.90L10.90 10.80" fill="none" stroke="#3c3f41" stroke-width="1.70" stroke-linejoin="miter"/><path d="M6.90 6.30L9.50 7.50L6.90 9.00" fill="none" stroke="#3c3f41" stroke-width="1.30"/></svg>
<span style="left:1047px;top:62.0px;font-size:13px;color:#bbb;letter-spacing:-0.025px;">LabeledExpr.g4</span>
<svg style="left:1145px;top:68px;" width="8" height="8" viewBox="0 0 8 8"><path d="M0.700 0.700l6.600 6.600M7.300 0.700l-6.600 6.600" stroke="#6e7173" stroke-width="1.100" fill="none"/></svg>
<svg style="left:1167.8px;top:63px;" width="16" height="16" viewBox="0 0 16 16"><circle cx="7.200" cy="8.500" r="7.100" fill="#3e89a8"/><text x="7.200" y="11.700" font-size="9.500" text-anchor="middle" fill="#21404f" font-family="Liberation Sans,sans-serif">C</text><path d="M8.800 0L16 4L8.800 8.200z" fill="#3c3f41"/><path d="M9.800 0.300L15.300 3.700L9.800 7z" fill="#62b543"/></svg>
<span style="left:1187.5px;top:62px;font-size:13px;color:#bbb;width:81px;overflow:hidden;letter-spacing:0.25px;-webkit-mask-image:linear-gradient(90deg,#000 82%,rgba(0,0,0,.3) 100%);mask-image:linear-gradient(90deg,#000 82%,rgba(0,0,0,.3) 100%);">DemoApplication.java</span>
<svg style="left:1280.3px;top:69.25px;" width="10" height="6" viewBox="0 0 10 6"><path d="M0.700 0.700L4.700 4.900L8.700 0.700" fill="none" stroke="#afb1b3" stroke-width="1.300"/></svg>
<svg style="left:1311px;top:65px;" width="4" height="14" viewBox="0 0 4 14"><circle cx="2" cy="2" r="1.500" fill="#afb1b3"/><circle cx="2" cy="7" r="1.500" fill="#afb1b3"/><circle cx="2" cy="12" r="1.500" fill="#afb1b3"/></svg>
<div style="left:447px;top:174px;width:878px;height:22px;background:#323232;"></div>
<div style="left:388px;top:174px;width:59px;height:22px;background:#323232;"></div>
<div style="left:446px;top:85px;width:1px;height:268px;background:#555555;"></div>
<div style="left:482px;top:130px;width:1px;height:223px;background:#3a3a3a;"></div>
<svg style="left:486px;top:92px;" width="10" height="10" viewBox="0 0 10 10"><circle cx="5" cy="2.800" r="2.300" fill="#787878"/><path d="M0.500 9.500c0-3 2-4 4.500-4s4.500 1 4.500 4z" fill="#787878"/></svg>
<span style="left:500px;top:88.0px;font-size:12.5px;color:#787878;letter-spacing:0.051px;">liuhaihua</span>
<span style="left:484px;top:109.5px;font-size:13.333px;color:#a9b7c6;font-family:'Liberation Mono',monospace;"><i style="color:#cc7832">public static void </i><i style="color:#ffc66d">main</i>(String[] args) <i style="color:#cc7832">throws </i><i style="color:#72737a">IOException</i> {</span>
<span style="left:484px;top:131.5px;font-size:13.333px;color:#808080;font-family:'Liberation Mono',monospace;">  <i style="text-decoration:underline wavy #8c8c6a 1px;text-underline-offset:3px;">/*</i>  String inputFile = null;</span>
<span style="left:484px;top:153.5px;font-size:13.333px;color:#808080;font-family:'Liberation Mono',monospace;">    if ( args.length&gt;0 ) inputFile = args[0];</span>
<span style="left:484px;top:175.5px;font-size:13.333px;color:#808080;font-family:'Liberation Mono',monospace;">    InputStream is = System.in;</span>
<span style="left:484px;top:197.5px;font-size:13.333px;color:#808080;font-family:'Liberation Mono',monospace;">    if ( inputFile!=null ) is = new FileInputStream(inputFile);*/</span>
<span style="left:484px;top:219.5px;font-size:13.333px;color:#a9b7c6;font-family:'Liberation Mono',monospace;">    <s>ANTLRInputStream</s> input = <i style="color:#cc7832">new </i><s>ANTLRInputStream</s>(<i style="color:#6a8759">"1+2*3</i><i style="color:#cc7832">\n</i><i style="color:#6a8759">"</i>)<i style="color:#cc7832">;</i></span>
<span style="left:484px;top:241.5px;font-size:13.333px;color:#a9b7c6;font-family:'Liberation Mono',monospace;">    LabeledExprLexer lexer = <i style="color:#cc7832">new </i>LabeledExprLexer(input)<i style="color:#cc7832">;</i></span>
<span style="left:484px;top:263.5px;font-size:13.333px;color:#a9b7c6;font-family:'Liberation Mono',monospace;">    CommonTokenStream tokens = <i style="color:#cc7832">new </i>CommonTokenStream(lexer)<i style="color:#cc7832">;</i></span>
<span style="left:484px;top:285.5px;font-size:13.333px;color:#a9b7c6;font-family:'Liberation Mono',monospace;">    LabeledExprParser parser = <i style="color:#cc7832">new </i>LabeledExprParser(tokens)<i style="color:#cc7832">;</i></span>
<span style="left:484px;top:307.5px;font-size:13.333px;color:#a9b7c6;font-family:'Liberation Mono',monospace;">    ParseTree tree = parser.prog()<i style="color:#cc7832">;</i><i style="color:#808080"> // parse</i></span>
<span style="left:394px;top:109.5px;font-size:13px;color:#606366;letter-spacing:-1.302px;font-family:"Liberation Mono",monospace;">21</span>
<span style="left:394px;top:131.5px;font-size:13px;color:#606366;letter-spacing:-1.302px;font-family:"Liberation Mono",monospace;">22</span>
<span style="left:394px;top:153.5px;font-size:13px;color:#606366;letter-spacing:-1.302px;font-family:"Liberation Mono",monospace;">23</span>
<svg style="left:418px;top:113px;" width="9" height="12" viewBox="0 0 9 12"><path d="M0.300 0.300L8.700 6L0.300 11.700z" fill="#499c54"/></svg>
<svg style="left:441px;top:114.5px;" width="11" height="12" viewBox="0 0 11 12"><path d="M1 0.500h9v6.500l-4.500 4.500l-4.500-4.500z" fill="#313335" stroke="#6f7173" stroke-width="1"/><path d="M3.200 4.500h4.600" stroke="#8a8c8e" stroke-width="1"/></svg>
<svg style="left:441px;top:136.5px;" width="11" height="12" viewBox="0 0 11 12"><path d="M1 0.500h9v6.500l-4.500 4.500l-4.500-4.500z" fill="#313335" stroke="#6f7173" stroke-width="1"/><path d="M3.200 4.500h4.600" stroke="#8a8c8e" stroke-width="1"/></svg>
<svg style="left:1195px;top:92px;" width="13" height="12" viewBox="0 0 13 12"><path d="M6.500 0.500L12.800 11.500H0.200z" fill="#e6b422"/><path d="M6.500 4v4" stroke="#2b2b2b" stroke-width="1.600"/><circle cx="6.500" cy="9.800" r="0.900" fill="#2b2b2b"/></svg>
<span style="left:1210px;top:88.5px;font-size:13px;color:#bbb;letter-spacing:0.271px;">8</span>
<svg style="left:1225px;top:92px;" width="13" height="12" viewBox="0 0 13 12"><path d="M6.500 0.500L12.800 11.500H0.200z" fill="#a39a7a"/><path d="M6.500 4v4" stroke="#2b2b2b" stroke-width="1.600"/><circle cx="6.500" cy="9.800" r="0.900" fill="#2b2b2b"/></svg>
<span style="left:1240px;top:88.5px;font-size:13px;color:#bbb;letter-spacing:-0.229px;">1</span>
<svg style="left:1254px;top:92px;" width="15" height="13" viewBox="0 0 15 13"><path d="M1.500 6L5 9.500L13 1" fill="none" stroke="#4fa35a" stroke-width="2"/><path d="M0.500 11.500l2-1.500l2 1.500l2-1.500l2 1.500l2-1.500l2 1.500" fill="none" stroke="#4fa35a" stroke-width="1"/></svg>
<span style="left:1270px;top:88.5px;font-size:13px;color:#bbb;letter-spacing:0.271px;">4</span>
<svg style="left:1287.5px;top:95.5px;" width="10" height="6" viewBox="0 0 10 6"><path d="M0.800 5.200L5 1L9.200 5.200" fill="none" stroke="#bbb" stroke-width="1.400"/></svg>
<svg style="left:1308.5px;top:95.5px;" width="10" height="6" viewBox="0 0 10 6"><path d="M0.800 0.800L5 5L9.200 0.800" fill="none" stroke="#bbb" stroke-width="1.400"/></svg>
<div style="left:1311px;top:147px;width:14px;height:2px;background:#d9a720;"></div>
<div style="left:1311px;top:158px;width:14px;height:2px;background:#d9a720;"></div>
<div style="left:1311px;top:184px;width:14px;height:2px;background:#d9a720;"></div>
<div style="left:1311px;top:189.5px;width:14px;height:2px;background:#d9a720;"></div>
<div style="left:1311px;top:195px;width:14px;height:2px;background:#d9a720;"></div>
<div style="left:1316px;top:222px;width:8px;height:62px;background:rgba(120,120,120,.35);"></div>
<div style="left:1311px;top:226px;width:14px;height:2px;background:#d9a720;"></div>
<div style="left:1311px;top:232px;width:14px;height:2px;background:#8d8461;"></div>
<div style="left:1311px;top:253px;width:14px;height:2px;background:#d9a720;"></div>
<div style="left:1327px;top:58px;width:252px;height:294px;background:#3c3f41;"></div>
<div style="left:1327px;top:84px;width:252px;height:1px;background:#323232;"></div>
<div style="left:1327px;top:113px;width:252px;height:1px;background:#323232;"></div>
<div style="left:1325px;top:58px;width:2px;height:295px;background:#323232;"></div>
<span style="left:1332.5px;top:62.0px;font-size:13px;color:#bbb;letter-spacing:-0.103px;">Maven</span>
<svg style="left:1533.5px;top:64.5px;" width="13" height="13" viewBox="0 0 15 15"><path d="M5.79 2.80L5.93 0.68L9.07 0.68L9.21 2.80L10.71 3.67L12.62 2.73L14.19 5.45L12.42 6.63L12.42 8.37L14.19 9.55L12.62 12.27L10.71 11.33L9.21 12.20L9.07 14.32L5.93 14.32L5.79 12.20L4.29 11.33L2.38 12.27L0.81 9.55L2.58 8.37L2.58 6.63L0.81 5.45L2.38 2.73L4.29 3.67z M5.20 7.50a2.3 2.3 0 1 0 4.6 0a2.3 2.3 0 1 0 -4.6 0z" fill="#afb1b3" fill-rule="evenodd" stroke="#afb1b3" stroke-width="0.6" stroke-linejoin="round"/></svg>
<div style="left:1560px;top:70px;width:12px;height:2px;background:#afb1b3;"></div>
<svg style="left:1353.25px;top:112.8px;" width="6" height="10" viewBox="0 0 6 10"><path d="M0.700 0.700L4.900 4.700L0.700 8.700" fill="none" stroke="#afb1b3" stroke-width="1.300"/></svg>
<svg style="left:1369px;top:110.5px;" width="16" height="16" viewBox="0 0 16 16"><path d="M0 0.500h5l1.500 2h7v5h-3l-3 3v2h-7.500z" fill="#8b959c"/><g transform="translate(7.600,7.600) scale(0.56)"><path d="M5.79 2.80L5.93 0.68L9.07 0.68L9.21 2.80L10.71 3.67L12.62 2.73L14.19 5.45L12.42 6.63L12.42 8.37L14.19 9.55L12.62 12.27L10.71 11.33L9.21 12.20L9.07 14.32L5.93 14.32L5.79 12.20L4.29 11.33L2.38 12.27L0.81 9.55L2.58 8.37L2.58 6.63L0.81 5.45L2.38 2.73L4.29 3.67z M5.20 7.50a2.3 2.3 0 1 0 4.6 0a2.3 2.3 0 1 0 -4.6 0z" fill="#35a7da" fill-rule="evenodd" stroke="#35a7da" stroke-width="0.6" stroke-linejoin="round"/></g></svg>
<span style="left:1387.2px;top:108.0px;font-size:13px;color:#bbb;letter-spacing:-0.262px;">Plugins</span>
<div style="left:1327px;top:85px;width:252px;height:28px;background:#3c3f41;"></div>
<div style="left:1327px;top:113px;width:252px;height:1px;background:#323232;"></div>
<svg style="left:1334px;top:92px;" width="14" height="14" viewBox="0 0 14 14"><path d="M12 5.200A5.300 5.300 0 0 0 2.300 4.500M2 8.800A5.300 5.300 0 0 0 11.700 9.500" fill="none" stroke="#afb1b3" stroke-width="1.700"/><path d="M0.500 1.500v4.500h4.500zM13.500 12.500v-4.500h-4.500z" fill="#afb1b3"/></svg>
<svg style="left:1359px;top:92px;" width="17" height="15" viewBox="0 0 17 15"><path d="M0 0.500h5l1.500 2h6.500v5.500a5 5 0 0 0-5 3h-8z" fill="#9aa7b0"/><path d="M15.500 9.500a3.300 3.300 0 0 0-6 -0.500M9.300 12.200a3.300 3.300 0 0 0 6 0.500" fill="none" stroke="#afb1b3" stroke-width="1.300"/><path d="M8.500 7v2.800h2.800zM16.500 15v-2.800h-2.800z" fill="#afb1b3"/></svg>
<svg style="left:1386px;top:91px;" width="16" height="16" viewBox="0 0 16 16"><path d="M7 0.500v8M3 5.500L7 9.500L11 5.500" fill="none" stroke="#afb1b3" stroke-width="1.800"/><path d="M0.500 12h13" stroke="#afb1b3" stroke-width="1.800"/><path d="M10.500 13.500h5.500l-2.750 2.500z" fill="#afb1b3"/></svg>
<div style="left:1409.5px;top:88px;width:1px;height:22px;background:#555759;"></div>
<svg style="left:1420px;top:93px;" width="12" height="12" viewBox="0 0 12 12"><path d="M6 0.500v11M0.500 6h11" stroke="#afb1b3" stroke-width="1.800"/></svg>
<div style="left:1442.5px;top:88px;width:1px;height:22px;background:#555759;"></div>
<svg style="left:1454px;top:92px;" width="12" height="14" viewBox="0 0 12 14"><path d="M0.500 0.500L11.500 7L0.500 13.500z" fill="#499c54"/></svg>
<span style="left:1476.5px;top:87.700px;font-size:18px;font-weight:bold;font-style:italic;color:#afb1b3;line-height:20px;letter-spacing:-0.5px;-webkit-text-stroke:0.5px #afb1b3;">m</span>
<svg style="left:1504px;top:92px;" width="15" height="14" viewBox="0 0 15 14"><path d="M0 7h5.500M9.500 7h5.500" stroke="#afb1b3" stroke-width="2.200"/><path d="M4.800 13.500L7.800 0.500M7.800 13.500L10.800 0.500" stroke="#afb1b3" stroke-width="2"/></svg>
<div style="left:1526px;top:88px;width:22px;height:22px;background:#5c6164;border-radius:3px;"></div>
<svg style="left:1530px;top:92px;" width="14" height="14" viewBox="0 0 14 14"><circle cx="7" cy="7" r="7" fill="#3d93bf"/><path d="M8.500 2L3.800 8h3L5.500 12L10.200 6h-3z" fill="#2d3b45"/></svg>
<svg style="left:1566px;top:95px;" width="9" height="8" viewBox="0 0 9 8"><path d="M0.700 0.700L3.700 4L0.700 7.300M4.700 0.700L7.700 4L4.700 7.300" fill="none" stroke="#8c8e90" stroke-width="1"/></svg>
<svg style="left:1353.25px;top:132.10000000000002px;" width="6" height="10" viewBox="0 0 6 10"><path d="M0.700 0.700L4.900 4.700L0.700 8.700" fill="none" stroke="#afb1b3" stroke-width="1.300"/></svg>
<svg style="left:1370.5px;top:129.8px;" width="14" height="16" viewBox="0 0 14 16"><path d="M3.500 0.500h7v13.500h-10v-10.500z" fill="#8b959c"/><path d="M0.500 3L3 0.500v2.500z" fill="#3c3f41"/><path d="M0.200 3.200L3.200 0.200" stroke="#3c3f41" stroke-width="0.800"/><path d="M5 2.500h3v4.500h-3z" fill="#3c3f41" opacity="0"/><rect x="3" y="8" width="11" height="8" fill="#3c3f41"/><path d="M6.200 0.500h1.200v7.500h-1.200z" fill="#3c3f41" opacity=".0"/><text x="3.300" y="14.800" font-size="11" font-weight="bold" font-style="italic" fill="#35a7da" stroke="#35a7da" stroke-width="0.300" font-family="Liberation Sans,sans-serif">m</text></svg>
<span style="left:1387.2px;top:127.30000000000001px;font-size:13px;color:#bbb;letter-spacing:-0.102px;">activiti</span>
<svg style="left:1353.25px;top:152.10000000000002px;" width="6" height="10" viewBox="0 0 6 10"><path d="M0.700 0.700L4.900 4.700L0.700 8.700" fill="none" stroke="#afb1b3" stroke-width="1.300"/></svg>
<svg style="left:1370.5px;top:149.8px;" width="14" height="16" viewBox="0 0 14 16"><path d="M3.500 0.500h7v13.500h-10v-10.500z" fill="#8b959c"/><path d="M0.500 3L3 0.500v2.500z" fill="#3c3f41"/><path d="M0.200 3.200L3.200 0.200" stroke="#3c3f41" stroke-width="0.800"/><path d="M5 2.500h3v4.500h-3z" fill="#3c3f41" opacity="0"/><rect x="3" y="8" width="11" height="8" fill="#3c3f41"/><path d="M6.200 0.500h1.200v7.500h-1.200z" fill="#3c3f41" opacity=".0"/><text x="3.300" y="14.800" font-size="11" font-weight="bold" font-style="italic" fill="#35a7da" stroke="#35a7da" stroke-width="0.300" font-family="Liberation Sans,sans-serif">m</text></svg>
<span style="left:1387.2px;top:147.3px;font-size:13px;color:#bbb;letter-spacing:-0.159px;text-decoration:underline wavy #bc3f3c 1px;text-underline-offset:2px;">ai</span>
<svg style="left:1351.3px;top:174.05px;" width="10" height="6" viewBox="0 0 10 6"><path d="M0.700 0.700L4.700 4.900L8.700 0.700" fill="none" stroke="#afb1b3" stroke-width="1.300"/></svg>
<svg style="left:1370.5px;top:169.8px;" width="14" height="16" viewBox="0 0 14 16"><path d="M3.500 0.500h7v13.500h-10v-10.500z" fill="#8b959c"/><path d="M0.500 3L3 0.500v2.500z" fill="#3c3f41"/><path d="M0.200 3.200L3.200 0.200" stroke="#3c3f41" stroke-width="0.800"/><path d="M5 2.500h3v4.500h-3z" fill="#3c3f41" opacity="0"/><rect x="3" y="8" width="11" height="8" fill="#3c3f41"/><path d="M6.200 0.500h1.200v7.500h-1.200z" fill="#3c3f41" opacity=".0"/><text x="3.300" y="14.800" font-size="11" font-weight="bold" font-style="italic" fill="#35a7da" stroke="#35a7da" stroke-width="0.300" font-family="Liberation Sans,sans-serif">m</text></svg>
<span style="left:1387.2px;top:167.3px;font-size:13px;color:#bbb;letter-spacing:-0.764px;">ANTLR</span>
<svg style="left:1369.3px;top:194.05px;" width="10" height="6" viewBox="0 0 10 6"><path d="M0.700 0.700L4.700 4.900L8.700 0.700" fill="none" stroke="#afb1b3" stroke-width="1.300"/></svg>
<svg style="left:1387px;top:189.8px;" width="16" height="16" viewBox="0 0 16 16"><path d="M0 0.500h5l1.500 2h7v5h-3l-3 3v2h-7.500z" fill="#8b959c"/><g transform="translate(7.600,7.600) scale(0.56)"><path d="M5.79 2.80L5.93 0.68L9.07 0.68L9.21 2.80L10.71 3.67L12.62 2.73L14.19 5.45L12.42 6.63L12.42 8.37L14.19 9.55L12.62 12.27L10.71 11.33L9.21 12.20L9.07 14.32L5.93 14.32L5.79 12.20L4.29 11.33L2.38 12.27L0.81 9.55L2.58 8.37L2.58 6.63L0.81 5.45L2.38 2.73L4.29 3.67z M5.20 7.50a2.3 2.3 0 1 0 4.6 0a2.3 2.3 0 1 0 -4.6 0z" fill="#35a7da" fill-rule="evenodd" stroke="#35a7da" stroke-width="0.6" stroke-linejoin="round"/></g></svg>
<span style="left:1405.4px;top:187.3px;font-size:13px;color:#bbb;letter-spacing:-0.353px;">Lifecycle</span>
<svg style="left:1405.5px;top:209.8px;" width="13.5" height="14" viewBox="0 0 13.5 14"><g transform="translate(0,0.300) scale(0.870)"><path d="M5.79 2.80L5.93 0.68L9.07 0.68L9.21 2.80L10.71 3.67L12.62 2.73L14.19 5.45L12.42 6.63L12.42 8.37L14.19 9.55L12.62 12.27L10.71 11.33L9.21 12.20L9.07 14.32L5.93 14.32L5.79 12.20L4.29 11.33L2.38 12.27L0.81 9.55L2.58 8.37L2.58 6.63L0.81 5.45L2.38 2.73L4.29 3.67z M4.80 7.50a2.7 2.7 0 1 0 5.4 0a2.7 2.7 0 1 0 -5.4 0z" fill="#8e989f" fill-rule="evenodd" stroke="#8e989f" stroke-width="0.6" stroke-linejoin="round"/></g></svg>
<span style="left:1423px;top:207.3px;font-size:13px;color:#bbb;letter-spacing:-0.215px;">clean</span>
<svg style="left:1405.5px;top:229.8px;" width="13.5" height="14" viewBox="0 0 13.5 14"><g transform="translate(0,0.300) scale(0.870)"><path d="M5.79 2.80L5.93 0.68L9.07 0.68L9.21 2.80L10.71 3.67L12.62 2.73L14.19 5.45L12.42 6.63L12.42 8.37L14.19 9.55L12.62 12.27L10.71 11.33L9.21 12.20L9.07 14.32L5.93 14.32L5.79 12.20L4.29 11.33L2.38 12.27L0.81 9.55L2.58 8.37L2.58 6.63L0.81 5.45L2.38 2.73L4.29 3.67z M4.80 7.50a2.7 2.7 0 1 0 5.4 0a2.7 2.7 0 1 0 -5.4 0z" fill="#8e989f" fill-rule="evenodd" stroke="#8e989f" stroke-width="0.6" stroke-linejoin="round"/></g></svg>
<span style="left:1423px;top:227.3px;font-size:13px;color:#bbb;letter-spacing:0.024px;">validate</span>
<svg style="left:1405.5px;top:249.8px;" width="13.5" height="14" viewBox="0 0 13.5 14"><g transform="translate(0,0.300) scale(0.870)"><path d="M5.79 2.80L5.93 0.68L9.07 0.68L9.21 2.80L10.71 3.67L12.62 2.73L14.19 5.45L12.42 6.63L12.42 8.37L14.19 9.55L12.62 12.27L10.71 11.33L9.21 12.20L9.07 14.32L5.93 14.32L5.79 12.20L4.29 11.33L2.38 12.27L0.81 9.55L2.58 8.37L2.58 6.63L0.81 5.45L2.38 2.73L4.29 3.67z M4.80 7.50a2.7 2.7 0 1 0 5.4 0a2.7 2.7 0 1 0 -5.4 0z" fill="#8e989f" fill-rule="evenodd" stroke="#8e989f" stroke-width="0.6" stroke-linejoin="round"/></g></svg>
<span style="left:1423px;top:247.3px;font-size:13px;color:#bbb;letter-spacing:0.172px;">compile</span>
<svg style="left:1405.5px;top:269.8px;" width="13.5" height="14" viewBox="0 0 13.5 14"><g transform="translate(0,0.300) scale(0.870)"><path d="M5.79 2.80L5.93 0.68L9.07 0.68L9.21 2.80L10.71 3.67L12.62 2.73L14.19 5.45L12.42 6.63L12.42 8.37L14.19 9.55L12.62 12.27L10.71 11.33L9.21 12.20L9.07 14.32L5.93 14.32L5.79 12.20L4.29 11.33L2.38 12.27L0.81 9.55L2.58 8.37L2.58 6.63L0.81 5.45L2.38 2.73L4.29 3.67z M4.80 7.50a2.7 2.7 0 1 0 5.4 0a2.7 2.7 0 1 0 -5.4 0z" fill="#8e989f" fill-rule="evenodd" stroke="#8e989f" stroke-width="0.6" stroke-linejoin="round"/></g></svg>
<span style="left:1423px;top:267.3px;font-size:13px;color:#6e7072;letter-spacing:0.012px;"><s>test</s></span>
<svg style="left:1405.5px;top:289.8px;" width="13.5" height="14" viewBox="0 0 13.5 14"><g transform="translate(0,0.300) scale(0.870)"><path d="M5.79 2.80L5.93 0.68L9.07 0.68L9.21 2.80L10.71 3.67L12.62 2.73L14.19 5.45L12.42 6.63L12.42 8.37L14.19 9.55L12.62 12.27L10.71 11.33L9.21 12.20L9.07 14.32L5.93 14.32L5.79 12.20L4.29 11.33L2.38 12.27L0.81 9.55L2.58 8.37L2.58 6.63L0.81 5.45L2.38 2.73L4.29 3.67z M4.80 7.50a2.7 2.7 0 1 0 5.4 0a2.7 2.7 0 1 0 -5.4 0z" fill="#8e989f" fill-rule="evenodd" stroke="#8e989f" stroke-width="0.6" stroke-linejoin="round"/></g></svg>
<span style="left:1423px;top:287.3px;font-size:13px;color:#bbb;letter-spacing:0.122px;">package</span>
<svg style="left:1405.5px;top:309.8px;" width="13.5" height="14" viewBox="0 0 13.5 14"><g transform="translate(0,0.300) scale(0.870)"><path d="M5.79 2.80L5.93 0.68L9.07 0.68L9.21 2.80L10.71 3.67L12.62 2.73L14.19 5.45L12.42 6.63L12.42 8.37L14.19 9.55L12.62 12.27L10.71 11.33L9.21 12.20L9.07 14.32L5.93 14.32L5.79 12.20L4.29 11.33L2.38 12.27L0.81 9.55L2.58 8.37L2.58 6.63L0.81 5.45L2.38 2.73L4.29 3.67z M4.80 7.50a2.7 2.7 0 1 0 5.4 0a2.7 2.7 0 1 0 -5.4 0z" fill="#8e989f" fill-rule="evenodd" stroke="#8e989f" stroke-width="0.6" stroke-linejoin="round"/></g></svg>
<span style="left:1423px;top:307.3px;font-size:13px;color:#bbb;letter-spacing:-0.010px;">verify</span>
<svg style="left:1405.5px;top:329.8px;" width="13.5" height="14" viewBox="0 0 13.5 14"><g transform="translate(0,0.300) scale(0.870)"><path d="M5.79 2.80L5.93 0.68L9.07 0.68L9.21 2.80L10.71 3.67L12.62 2.73L14.19 5.45L12.42 6.63L12.42 8.37L14.19 9.55L12.62 12.27L10.71 11.33L9.21 12.20L9.07 14.32L5.93 14.32L5.79 12.20L4.29 11.33L2.38 12.27L0.81 9.55L2.58 8.37L2.58 6.63L0.81 5.45L2.38 2.73L4.29 3.67z M4.80 7.50a2.7 2.7 0 1 0 5.4 0a2.7 2.7 0 1 0 -5.4 0z" fill="#8e989f" fill-rule="evenodd" stroke="#8e989f" stroke-width="0.6" stroke-linejoin="round"/></g></svg>
<span style="left:1423px;top:327.3px;font-size:13px;color:#bbb;letter-spacing:-0.034px;">install</span>
<svg style="left:1405.5px;top:349.8px;" width="13.5" height="14" viewBox="0 0 13.5 14"><g transform="translate(0,0.300) scale(0.870)"><path d="M5.79 2.80L5.93 0.68L9.07 0.68L9.21 2.80L10.71 3.67L12.62 2.73L14.19 5.45L12.42 6.63L12.42 8.37L14.19 9.55L12.62 12.27L10.71 11.33L9.21 12.20L9.07 14.32L5.93 14.32L5.79 12.20L4.29 11.33L2.38 12.27L0.81 9.55L2.58 8.37L2.58 6.63L0.81 5.45L2.38 2.73L4.29 3.67z M4.80 7.50a2.7 2.7 0 1 0 5.4 0a2.7 2.7 0 1 0 -5.4 0z" fill="#8e989f" fill-rule="evenodd" stroke="#8e989f" stroke-width="0.6" stroke-linejoin="round"/></g></svg>
<span style="left:1423px;top:347.3px;font-size:13px;color:#bbb;letter-spacing:0.443px;">site</span>
<div style="left:1570px;top:122px;width:8px;height:26px;background:#5a5d5e;"></div>
<div style="left:1327px;top:344px;width:252px;height:9px;background:#3c3f41;"></div>
<div style="left:1327px;top:344px;width:117px;height:8px;background:#595c5d;"></div>
<div style="left:1579px;top:58px;width:21px;height:759px;background:#3c3f41;"></div>
<div style="left:1579px;top:58px;width:1px;height:759px;background:#323232;"></div>
<div style="left:1580px;top:58px;width:20px;height:72px;background:#2d2f30;"></div>
<span style="left:1583px;top:62.700px;font-size:16px;font-weight:bold;font-style:italic;color:#afb1b3;line-height:20px;letter-spacing:-0.5px;-webkit-text-stroke:0.4px #afb1b3;">m</span>
<span style="left:1572.0px;top:93.0px;width:34px;text-align:center;font-size:11.8px;color:#ffffff;letter-spacing:-0.283px;transform:rotate(90deg);">Maven</span>
<svg style="left:1583px;top:142px;" width="14" height="15" viewBox="0 0 14 15"><path d="M6 1.500a1 1 0 0 1 2 0c2.500 0.600 3.500 2.500 3.500 5v3l1.500 2h-12l1.500-2v-3c0-2.500 1-4.400 3.500-5z" fill="#afb1b3"/><circle cx="7" cy="13.300" r="1.500" fill="#afb1b3"/><circle cx="11.500" cy="2.500" r="2.500" fill="#3c3f41"/><circle cx="11.500" cy="2.500" r="1.800" fill="#3592c4"/></svg>
<span style="left:1555.5px;top:184.5px;width:67px;text-align:center;font-size:11.8px;color:#bbb;letter-spacing:0.210px;transform:rotate(90deg);">Notifications</span>
<div style="left:22px;top:353px;width:1557px;height:1px;background:#323232;"></div>
<div style="left:22px;top:354px;width:1557px;height:463px;background:#3c3f41;"></div>
<div style="left:21px;top:354px;width:1px;height:463px;background:#323232;"></div>
<div style="left:22px;top:380px;width:1557px;height:1px;background:#323232;"></div>
<span style="left:28px;top:358.0px;font-size:13px;color:#bbb;letter-spacing:-0.405px;">ANTLR Preview</span>
<svg style="left:1533.5px;top:361px;" width="13" height="13" viewBox="0 0 15 15"><path d="M5.79 2.80L5.93 0.68L9.07 0.68L9.21 2.80L10.71 3.67L12.62 2.73L14.19 5.45L12.42 6.63L12.42 8.37L14.19 9.55L12.62 12.27L10.71 11.33L9.21 12.20L9.07 14.32L5.93 14.32L5.79 12.20L4.29 11.33L2.38 12.27L0.81 9.55L2.58 8.37L2.58 6.63L0.81 5.45L2.38 2.73L4.29 3.67z M5.20 7.50a2.3 2.3 0 1 0 4.6 0a2.3 2.3 0 1 0 -4.6 0z" fill="#afb1b3" fill-rule="evenodd" stroke="#afb1b3" stroke-width="0.6" stroke-linejoin="round"/></svg>
<div style="left:1560px;top:367px;width:12px;height:2px;background:#afb1b3;"></div>
<div style="left:25px;top:385px;width:22px;height:22px;background:#4c5052;border-radius:3px;"></div>
<svg style="left:29px;top:389px;" width="14" height="14" viewBox="0 0 14 14"><path d="M12 5.200A5.300 5.300 0 0 0 2.300 4.500M2 8.800A5.300 5.300 0 0 0 11.700 9.500" fill="none" stroke="#afb1b3" stroke-width="1.700"/><path d="M0.500 1.500v4.500h4.500zM13.500 12.500v-4.500h-4.500z" fill="#afb1b3"/></svg>
<div style="left:31px;top:417px;width:10px;height:10px;background:#5b5d5f;"></div>
<svg style="left:29px;top:441px;" width="14" height="14" viewBox="0 0 14 14"><path d="M1 4.500v-3.500h12v3.500" fill="none" stroke="#afb1b3" stroke-width="1.500"/><path d="M7 4v8.500M3.500 9L7 12.800L10.500 9" fill="none" stroke="#afb1b3" stroke-width="1.700"/></svg>
<svg style="left:29px;top:467px;" width="15" height="15" viewBox="0 0 15 15"><circle cx="6" cy="6" r="4.300" fill="none" stroke="#afb1b3" stroke-width="1.800"/><path d="M9.200 9.200l4.800 4.800" stroke="#afb1b3" stroke-width="2"/></svg>
<div style="left:25px;top:489px;width:22px;height:22px;background:#4c5052;border-radius:3px;"></div>
<svg style="left:30px;top:494px;" width="12" height="12" viewBox="0 0 12 12"><rect x="4" y="0" width="4" height="4" fill="#afb1b3"/><rect x="0" y="8" width="4" height="4" fill="#afb1b3"/><rect x="8" y="8" width="4" height="4" fill="#afb1b3"/><path d="M6 4v2.500M2 8v-2h8v2" fill="none" stroke="#afb1b3" stroke-width="1.200"/></svg>
<div style="left:25px;top:515px;width:22px;height:22px;background:#4c5052;border-radius:3px;"></div>
<svg style="left:29px;top:519px;" width="15" height="14" viewBox="0 0 15 14"><path d="M0 0h3.500l1 1.500h3.500v4h-8z" fill="#afb1b3"/><path d="M3.500 6v6.500h5.500M3.500 9h5.500" fill="none" stroke="#afb1b3" stroke-width="1.100"/><rect x="10" y="7.200" width="4" height="3" fill="#afb1b3"/><rect x="10" y="11" width="4" height="3" fill="#afb1b3"/></svg>
<div style="left:50px;top:382px;width:759px;height:42px;border:1px solid #5a5d5f;background:#3c3f41;"></div>
<svg style="left:110.8px;top:396.2px;" width="14" height="14" viewBox="0 0 14 14"><circle cx="7" cy="7" r="7" fill="#ee3430"/><path d="M3.40 10.50L7.00 2.82L10.60 10.50" fill="none" stroke="#3c3f41" stroke-width="1.65" stroke-linejoin="miter"/><path d="M6.71 6.12L9.24 7.29L6.71 8.75" fill="none" stroke="#3c3f41" stroke-width="1.26"/></svg>
<span style="left:130.5px;top:393.5px;font-size:13px;color:#bbb;font-weight:bold;letter-spacing:-0.213px;">LabeledExpr.g4</span>
<div style="left:380px;top:391px;width:362px;height:25px;border:1px solid #646668;background:#45494a;"></div>
<svg style="left:721px;top:398px;" width="17" height="12" viewBox="0 0 17 12"><path d="M0 0.500h5l1.500 2h6.500v2h-9.500l-3.500 7z" fill="#7f8385"/><path d="M4.200 5.500h12.300l-3.500 6.500h-12.300z" fill="#7f8385"/></svg>
<div style="left:50px;top:427px;width:760px;height:331px;background:#2b2b2b;"></div>
<div style="left:50px;top:427px;width:42px;height:331px;background:#313335;"></div>
<div style="left:92px;top:427px;width:1px;height:331px;background:#555555;"></div>
<div style="left:93px;top:450px;width:717px;height:22px;background:#323232;"></div>
<div style="left:50px;top:450px;width:42px;height:22px;background:#323232;"></div>
<span style="left:57px;top:430.3px;font-size:13px;color:#606366;letter-spacing:-1.229px;">1</span>
<span style="left:57px;top:451.5px;font-size:13px;color:#a4a3a3;letter-spacing:-0.729px;">2</span>
<span style="left:98.400px;top:430.300px;font-size:13.333px;color:#a9b7c6;font-family:'Liberation Mono',monospace;">1+2*3+3*4</span>
<div style="left:50px;top:758px;width:759px;height:57px;border:1px solid #86a0ba;background:#45494a;"></div>
<div style="left:818px;top:412px;width:761px;height:1px;background:#35383a;"></div>
<div style="left:818px;top:410px;width:85px;height:3px;background:#4a8bd1;"></div>
<span style="left:831px;top:386.0px;font-size:13px;color:#bbb;letter-spacing:-0.097px;">Parse tree</span>
<span style="left:916px;top:386.0px;font-size:13px;color:#bbb;letter-spacing:-0.069px;">Hierarchy</span>
<span style="left:997px;top:386.0px;font-size:13px;color:#bbb;letter-spacing:0.103px;">Profiler</span>
<div style="left:826px;top:418px;width:743px;height:367px;border:1px solid #34373a;background:#3c3f41;"></div>
<svg style="left:826px;top:418px;" width="744" height="368" viewBox="826 418 744 368"><path d="M1020.5 436L1020.5 452.5M1020 469L984 485M1020 469L1056 485M984 502L896 518M984 502L986 518M984 502L1074 518M896 535L847.5 551M896 535L891.5 551M896 535L946 551M1073 535L1030 551M1073.5 535L1073.5 551M1073 535L1116 551M847.5 568L847.5 584M946 568L903.5 584M946.5 568L946.5 584M946 568L989 584M1030.5 568L1030.5 584M1116.5 568L1116.5 584M903.5 601L903.5 617M989.5 601L989.5 617" fill="none" stroke="#b4b4b4" stroke-width="1"/></svg>
<span style="left:1007.5px;top:418.5px;font-size:11px;color:#c4c4c4;letter-spacing:0.372px;">prog</span>
<span style="left:987.5px;top:451.5px;font-size:11px;color:#c4c4c4;letter-spacing:-0.093px;">stat:printExpr</span>
<span style="left:951.5px;top:484.5px;font-size:11px;color:#c4c4c4;letter-spacing:-0.009px;">expr:AddSub</span>
<span style="left:1026px;top:484.5px;font-size:11px;color:#c4c4c4;letter-spacing:-0.585px;">NEWLINE:\n</span>
<span style="left:863.5px;top:517.5px;font-size:11px;color:#c4c4c4;letter-spacing:-0.009px;">expr:AddSub</span>
<span style="left:971px;top:517.5px;font-size:11px;color:#c4c4c4;letter-spacing:-0.541px;">ADD:+</span>
<span style="left:1044.5px;top:517.5px;font-size:11px;color:#c4c4c4;letter-spacing:-0.233px;">expr:MulDiv</span>
<span style="left:828.5px;top:550.5px;font-size:11px;color:#c4c4c4;letter-spacing:-0.071px;">expr:int</span>
<span style="left:876px;top:550.5px;font-size:11px;color:#c4c4c4;letter-spacing:-0.541px;">ADD:+</span>
<span style="left:917.5px;top:550.5px;font-size:11px;color:#c4c4c4;letter-spacing:-0.233px;">expr:MulDiv</span>
<span style="left:1011.5px;top:550.5px;font-size:11px;color:#c4c4c4;letter-spacing:-0.071px;">expr:int</span>
<span style="left:1058.5px;top:550.5px;font-size:11px;color:#c4c4c4;letter-spacing:-0.512px;">MUL:*</span>
<span style="left:1097.5px;top:550.5px;font-size:11px;color:#c4c4c4;letter-spacing:-0.071px;">expr:int</span>
<span style="left:834px;top:583.5px;font-size:11px;color:#c4c4c4;letter-spacing:-0.535px;">INT:1</span>
<span style="left:884.5px;top:583.5px;font-size:11px;color:#c4c4c4;letter-spacing:-0.071px;">expr:int</span>
<span style="left:931.5px;top:583.5px;font-size:11px;color:#c4c4c4;letter-spacing:-0.512px;">MUL:*</span>
<span style="left:970.5px;top:583.5px;font-size:11px;color:#c4c4c4;letter-spacing:-0.071px;">expr:int</span>
<span style="left:1017px;top:583.5px;font-size:11px;color:#c4c4c4;letter-spacing:-0.235px;">INT:3</span>
<span style="left:1103px;top:583.5px;font-size:11px;color:#c4c4c4;letter-spacing:-0.335px;">INT:4</span>
<span style="left:890px;top:616.5px;font-size:11px;color:#c4c4c4;letter-spacing:-0.235px;">INT:2</span>
<span style="left:976px;top:616.5px;font-size:11px;color:#c4c4c4;letter-spacing:-0.235px;">INT:3</span>
<div style="left:838px;top:798px;width:723px;height:3px;background:#6e7072;"></div>
<svg style="left:1191px;top:792px;" width="16" height="17" viewBox="0 0 16 17"><path d="M0.500 0.500h15v9.500l-7.500 6.500l-7.500-6.500z" fill="#9da0a2" stroke="#84878a" stroke-width="1"/></svg>
<svg style="left:140px;top:445px;" width="40" height="195" viewBox="140 445 40 195"><path d="M156.500 450L148.700 465L153.100 463L167.300 635L168 635L162.200 463L166.400 464.300z" fill="#ff1a0e"/></svg>
<svg style="left:795px;top:665px;" width="112" height="55" viewBox="795 665 112 55"><path d="M799.600 714.600L887.400 674.100L884.100 670.700L902.400 673.500L890.600 687.300L891.500 683.200L800.700 716.200z" fill="#ff1a0e"/></svg>
<div style="left:0px;top:817px;width:1600px;height:1px;background:#323232;"></div>
<div style="left:0px;top:818px;width:1600px;height:23px;background:#3c3f41;"></div>
<div style="left:956.5px;top:818px;width:120px;height:21px;background:#2d2f30;"></div>
<svg style="left:32px;top:823px;" width="9" height="13" viewBox="0 0 9 13"><circle cx="2" cy="2.200" r="1.700" fill="#afb1b3"/><circle cx="2" cy="11" r="1.700" fill="#afb1b3"/><circle cx="7" cy="4" r="1.700" fill="#afb1b3"/><path d="M2 2v9M7 4c0 3-5 2.500-5 5" fill="none" stroke="#afb1b3" stroke-width="1.300"/></svg>
<span style="left:47px;top:820.5px;font-size:11.8px;color:#bbb;letter-spacing:-0.026px;">Git</span>
<svg style="left:81.5px;top:824px;" width="9" height="11" viewBox="0 0 9 11"><path d="M0.300 0.300L8.700 5.500L0.300 10.700z" fill="#afb1b3"/></svg>
<span style="left:97px;top:820.5px;font-size:11.8px;color:#bbb;letter-spacing:-0.382px;">Run</span>
<svg style="left:138px;top:823px;" width="12" height="13" viewBox="0 0 12 13"><ellipse cx="6" cy="7.500" rx="3.600" ry="4.500" fill="#afb1b3"/><circle cx="6" cy="2.800" r="2" fill="#afb1b3"/><path d="M0.500 4.500l2.500 1.500M11.500 4.500l-2.500 1.500M0 8h3M12 8h-3M0.800 12l2.500-1.500M11.200 12l-2.500-1.500" stroke="#afb1b3" stroke-width="1.200" fill="none"/></svg>
<span style="left:154px;top:820.5px;font-size:11.8px;color:#bbb;letter-spacing:-0.054px;">Debug</span>
<svg style="left:212.5px;top:823px;" width="13" height="13" viewBox="0 0 13 13"><path d="M6.500 0.500L12.500 3.500L6.500 6.500L0.500 3.500z" fill="#afb1b3"/><path d="M0.500 6.200L6.500 9.200L12.500 6.200M0.500 8.800L6.500 11.800L12.500 8.800" fill="none" stroke="#afb1b3" stroke-width="1.300"/></svg>
<span style="left:229px;top:820.5px;font-size:11.8px;color:#bbb;letter-spacing:0.453px;">Profiler</span>
<svg style="left:500px;top:823px;" width="13" height="13" viewBox="0 0 13 13"><circle cx="6.500" cy="6.500" r="6" fill="#afb1b3"/><path d="M6.500 3v4.500" stroke="#3c3f41" stroke-width="1.600"/><circle cx="6.500" cy="9.800" r="0.900" fill="#3c3f41"/></svg>
<span style="left:529.5px;top:820.5px;font-size:11.8px;color:#bbb;letter-spacing:0.020px;">Problems</span>
<svg style="left:602px;top:824px;" width="11" height="11" viewBox="0 0 11 11"><rect x="0" y="0" width="11" height="11" fill="#afb1b3"/><path d="M2 2.500L4.800 5L2 7.500M5.500 8.500h3.500" fill="none" stroke="#3c3f41" stroke-width="1.200"/></svg>
<span style="left:618.4px;top:820.5px;font-size:11.8px;color:#bbb;letter-spacing:-0.061px;">Terminal</span>
<svg style="left:684px;top:823px;" width="13" height="13" viewBox="0 0 13 13"><path d="M3.500 0.500h6l3 6l-3 6h-6l-3-6z" fill="#afb1b3"/><path d="M4.800 3.500L9.500 6.500L4.800 9.500z" fill="#3c3f41"/></svg>
<span style="left:701px;top:820.5px;font-size:11.8px;color:#bbb;letter-spacing:-0.406px;">Services</span>
<svg style="left:765px;top:822px;" width="14" height="15" viewBox="0 0 14 15"><rect x="5" y="3.500" width="3.500" height="9" fill="#f0a732"/><path d="M0.500 4h3M2 2.500l1.500 1.500l-1.500 1.500" stroke="#3592c4" stroke-width="1.100" fill="none"/><path d="M9.500 11.500h3.500M11.500 9.500l2 2l-2 2" stroke="#3592c4" stroke-width="1.200" fill="none"/><circle cx="2.500" cy="1.500" r="1" fill="#3592c4"/></svg>
<span style="left:783.3px;top:820.5px;font-size:11.8px;color:#bbb;letter-spacing:-0.188px;">Sequence Diagram</span>
<svg style="left:902px;top:823px;" width="14" height="13" viewBox="0 0 14 13"><path d="M0.500 4.800L6.800 0.800L8.200 3L2 7z" fill="#afb1b3"/><path d="M4.800 4.200L6.500 3L13 11.200L11.200 12.500z" fill="#afb1b3"/></svg>
<span style="left:920.8px;top:820.5px;font-size:11.8px;color:#bbb;letter-spacing:-0.068px;">Build</span>
<svg style="left:968.8px;top:822.9px;" width="13.2" height="13.2" viewBox="0 0 13.2 13.2"><circle cx="6.6" cy="6.6" r="6.6" fill="#c9cbcd"/><path d="M3.21 9.90L6.60 2.66L9.99 9.90" fill="none" stroke="#2d2f30" stroke-width="1.56" stroke-linejoin="miter"/><path d="M6.32 5.77L8.71 6.88L6.32 8.25" fill="none" stroke="#2d2f30" stroke-width="1.19"/></svg>
<span style="left:986.3px;top:820.5px;font-size:11.8px;color:#ffffff;letter-spacing:-0.325px;">ANTLR Preview</span>
<svg style="left:1090px;top:823px;" width="13" height="13" viewBox="0 0 13 13"><path d="M6.500 0.500L12.500 3.500L6.500 6.500L0.500 3.500z" fill="#afb1b3"/><path d="M0.500 6.200L6.500 9.200L12.500 6.200M0.500 8.800L6.500 11.800L12.500 8.800" fill="none" stroke="#afb1b3" stroke-width="1.300"/></svg>
<span style="left:1107.6px;top:820.5px;font-size:11.8px;color:#bbb;letter-spacing:-0.195px;">Dependencies</span>
<svg style="left:1203.5px;top:823px;" width="13" height="13" viewBox="0 0 13 13"><path d="M6.500 1L11.300 3.800v5.500L6.500 12L1.700 9.300V3.800z" fill="none" stroke="#afb1b3" stroke-width="1"/><path d="M6.500 1L11.300 9.300H1.700z" fill="none" stroke="#afb1b3" stroke-width="0.900"/><circle cx="6.500" cy="1.200" r="1.200" fill="#afb1b3"/><circle cx="11.300" cy="3.800" r="1.200" fill="#afb1b3"/><circle cx="11.300" cy="9.300" r="1.200" fill="#afb1b3"/><circle cx="6.500" cy="11.800" r="1.200" fill="#afb1b3"/><circle cx="1.700" cy="9.300" r="1.200" fill="#afb1b3"/><circle cx="1.700" cy="3.800" r="1.200" fill="#afb1b3"/></svg>
<span style="left:1220px;top:820.5px;font-size:11.8px;color:#bbb;letter-spacing:-0.219px;">GraphQL</span>
<svg style="left:1423px;top:823px;" width="14" height="13" viewBox="0 0 14 13"><rect x="2.500" y="0" width="5" height="4.500" fill="#afb1b3"/><rect x="0" y="8" width="5" height="4.500" fill="#afb1b3"/><rect x="8.500" y="8" width="5" height="4.500" fill="#afb1b3"/><path d="M5 4.500v3.500M5 10.300h3.500" stroke="#afb1b3" stroke-width="1.200" fill="none"/></svg>
<span style="left:1440px;top:820.5px;font-size:11.8px;color:#bbb;letter-spacing:0.194px;">BPMN-Activiti-Diagram</span>
<div style="left:0px;top:841px;width:1600px;height:19px;background:#3c3f41;"></div>
<div style="left:0px;top:839px;width:1600px;height:1px;background:#414345;"></div>
<svg style="left:6px;top:844px;" width="13" height="12" viewBox="0 0 13 12"><rect x="0.500" y="2.500" width="9" height="9" fill="none" stroke="#afb1b3" stroke-width="1"/><path d="M2.500 2.500v-2h10v10h-3" fill="none" stroke="#afb1b3" stroke-width="1"/></svg>
<span style="left:27px;top:840.5px;font-size:13px;color:#bbb;letter-spacing:0.133px;">Pushed 2 commits to origin/master</span>
<span style="left:1293px;top:840.5px;font-size:13px;color:#bbb;letter-spacing:-0.506px;">24:35</span>
<span style="left:1336.3px;top:840.5px;font-size:13px;color:#bbb;letter-spacing:-1.562px;">CRLF</span>
<span style="left:1376.5px;top:840.5px;font-size:13px;color:#bbb;letter-spacing:-0.665px;">UTF-8</span>
<span style="left:1422px;top:840.5px;font-size:13px;color:#bbb;letter-spacing:-0.191px;">4 spaces</span>
<svg style="left:1487px;top:843.5px;" width="9" height="13" viewBox="0 0 9 13"><circle cx="2" cy="2.200" r="1.700" fill="#afb1b3"/><circle cx="2" cy="11" r="1.700" fill="#afb1b3"/><circle cx="7" cy="4" r="1.700" fill="#afb1b3"/><path d="M2 2v9M7 4c0 3-5 2.500-5 5" fill="none" stroke="#afb1b3" stroke-width="1.300"/></svg>
<span style="left:1502.5px;top:840.5px;font-size:13px;color:#bbb;letter-spacing:-0.121px;">master</span>
<svg style="left:1552px;top:844px;" width="12" height="12" viewBox="0 0 12 12"><rect x="3" y="5.500" width="8.500" height="6" fill="#afb1b3"/><path d="M1 6v-2.500a2.300 2.300 0 0 1 4.600 0v2" fill="none" stroke="#afb1b3" stroke-width="1.400"/></svg>
<svg style="left:1576px;top:843.5px;" width="13" height="13" viewBox="0 0 13 13"><circle cx="6.500" cy="6.500" r="6.500" fill="#db4e4e"/><path d="M6.500 2.800v4.500" stroke="#3c3f41" stroke-width="1.800"/><circle cx="6.500" cy="9.800" r="1" fill="#3c3f41"/></svg>
<div style="left:0px;top:860px;width:1600px;height:8px;background:#2b2e22;"></div>
<div style="left:0px;top:860px;width:48px;height:8px;background:#1e2716;"></div>
<div style="left:48px;top:860px;width:180px;height:8px;background:#f4f4f4;"></div>
<div style="left:562px;top:860px;width:70px;height:8px;background:linear-gradient(90deg,#23231a,#2c2b20);"></div>
<div style="left:632px;top:860px;width:44px;height:8px;background:#56564f;"></div>
<div style="left:676px;top:860px;width:3px;height:8px;background:#2a2622;"></div>
<div style="left:679px;top:860px;width:921px;height:8px;background:linear-gradient(90deg,#3b342b 0px,#3b3a28 60px,#3a3d26 120px,#393c26 400px,#2f3122 520px,#22231c 660px,#1d1d19 760px,#1c1c18 921px);"></div>
<div style="left:1595px;top:860px;width:1px;height:8px;background:#8a8a86;"></div>
<span style="left:1495px;top:864.500px;font-size:12.500px;color:#fff;line-height:14px;height:14px;letter-spacing:0.8px;">15:21</span>
<div style="left:225px;top:164px;width:335px;height:710px;background:#3c3f41;border:1px solid #5c5e60;border-right-color:#2f3133;"></div>
<span style="left:258.2px;top:170.6px;font-size:13px;color:#bbbbbb;letter-spacing:-0.069px;">New</span>
<svg style="left:543.5px;top:175px;" width="7" height="10" viewBox="0 0 7 10"><path d="M0.800 0.800L5.200 4.800L0.800 8.800" fill="none" stroke="#a6a8aa" stroke-width="1.200"/></svg>
<svg style="left:237.5px;top:193.2px;" width="15" height="15" viewBox="0 0 15 15"><rect x="5" y="2" width="4" height="10.500" fill="#626466"/><path d="M0.500 3.500h3M2 2l1.500 1.500L2 5M10 11.500h4M12 9.500l2 2l-2 2" stroke="#626466" stroke-width="1.200" fill="none"/></svg>
<span style="left:258.2px;top:191.6px;font-size:13px;color:#777777;letter-spacing:-0.174px;">Sequence Diagram...</span>
<svg style="left:543.5px;top:196px;" width="7" height="10" viewBox="0 0 7 10"><path d="M0.800 0.800L5.200 4.800L0.800 8.800" fill="none" stroke="#5c5e60" stroke-width="1.200"/></svg>
<div style="left:236.5px;top:216px;width:314.5px;height:1px;background:#515355;"></div>
<svg style="left:238px;top:223.7px;" width="14" height="14" viewBox="0 0 14 14"><circle cx="2.800" cy="3" r="2" fill="none" stroke="#afb1b3" stroke-width="1.400"/><circle cx="2.800" cy="11" r="2" fill="none" stroke="#afb1b3" stroke-width="1.400"/><path d="M4.300 4.300L13 12M4.300 9.700L13 2" stroke="#afb1b3" stroke-width="1.600" fill="none"/></svg>
<span style="left:258.2px;top:221.6px;font-size:13px;color:#bbbbbb;letter-spacing:-0.476px;">Cu<u>t</u></span>
<span style="left:514px;top:221.6px;font-size:13px;color:#bbbbbb;letter-spacing:0.086px;">Ctrl+X</span>
<svg style="left:238.5px;top:244.7px;" width="13" height="13" viewBox="0 0 13 13"><path d="M0.500 9.500v-9h8.500" fill="none" stroke="#afb1b3" stroke-width="1.200"/><rect x="2.500" y="2.500" width="10" height="10.500" fill="#afb1b3"/><path d="M4.500 5.500h6M4.500 7.800h6M4.500 10h6" stroke="#3c3f41" stroke-width="1"/></svg>
<span style="left:258.2px;top:242.6px;font-size:13px;color:#bbbbbb;letter-spacing:-0.137px;"><u>C</u>opy</span>
<span style="left:514px;top:242.6px;font-size:13px;color:#bbbbbb;letter-spacing:-0.033px;">Ctrl+C</span>
<span style="left:258.2px;top:263.6px;font-size:13px;color:#bbbbbb;letter-spacing:-0.215px;">Copy Path/Reference...</span>
<svg style="left:239.5px;top:286.7px;" width="11" height="14" viewBox="0 0 11 14"><path d="M1 2.500h9v10.500h-9z" fill="none" stroke="#afb1b3" stroke-width="1.800"/><rect x="3.200" y="0.500" width="4.600" height="3" fill="#afb1b3"/></svg>
<span style="left:258.2px;top:284.6px;font-size:13px;color:#bbbbbb;letter-spacing:-0.488px;"><u>P</u>aste</span>
<span style="left:514px;top:284.6px;font-size:13px;color:#bbbbbb;letter-spacing:0.086px;">Ctrl+V</span>
<div style="left:236.5px;top:309px;width:314.5px;height:1px;background:#515355;"></div>
<span style="left:258.2px;top:314.6px;font-size:13px;color:#bbbbbb;letter-spacing:-0.243px;">Find <u>U</u>sages</span>
<span style="left:514px;top:314.6px;font-size:13px;color:#bbbbbb;letter-spacing:-0.156px;">Alt+F7</span>
<span style="left:258.2px;top:335.6px;font-size:13px;color:#bbbbbb;letter-spacing:-0.407px;">Analy<u>z</u>e</span>
<svg style="left:543.5px;top:340px;" width="7" height="10" viewBox="0 0 7 10"><path d="M0.800 0.800L5.200 4.800L0.800 8.800" fill="none" stroke="#a6a8aa" stroke-width="1.200"/></svg>
<div style="left:236.5px;top:360px;width:314.5px;height:1px;background:#515355;"></div>
<span style="left:258.2px;top:365.6px;font-size:13px;color:#bbbbbb;letter-spacing:-0.041px;"><u>R</u>efactor</span>
<svg style="left:543.5px;top:370px;" width="7" height="10" viewBox="0 0 7 10"><path d="M0.800 0.800L5.200 4.800L0.800 8.800" fill="none" stroke="#a6a8aa" stroke-width="1.200"/></svg>
<div style="left:236.5px;top:390px;width:314.5px;height:1px;background:#515355;"></div>
<span style="left:258.2px;top:395.6px;font-size:13px;color:#bbbbbb;letter-spacing:0.198px;">Bookmarks</span>
<svg style="left:543.5px;top:400px;" width="7" height="10" viewBox="0 0 7 10"><path d="M0.800 0.800L5.200 4.800L0.800 8.800" fill="none" stroke="#a6a8aa" stroke-width="1.200"/></svg>
<div style="left:236.5px;top:420px;width:314.5px;height:1px;background:#515355;"></div>
<span style="left:258.2px;top:425.6px;font-size:13px;color:#bbbbbb;letter-spacing:-0.179px;"><u>D</u>elete...</span>
<span style="left:514px;top:425.6px;font-size:13px;color:#bbbbbb;letter-spacing:-0.096px;">Delete</span>
<span style="left:258.2px;top:446.6px;font-size:13px;color:#bbbbbb;letter-spacing:-0.026px;">Override File Type</span>
<div style="left:236.5px;top:471px;width:314.5px;height:1px;background:#515355;"></div>
<span style="left:236.5px;top:474.5px;font-size:18px;font-weight:bold;font-style:italic;color:#3592c4;line-height:20px;-webkit-text-stroke:0.5px #3592c4;">m</span>
<svg style="left:245px;top:484px;" width="8" height="9" viewBox="0 0 8 9"><path d="M0 0L7.500 4.500L0 9z" fill="#3c3f41"/><path d="M1.300 1.500L6.800 4.500L1.300 7.800z" fill="#afb1b3"/></svg>
<span style="left:258.2px;top:476.6px;font-size:13px;color:#bbbbbb;letter-spacing:-0.164px;">Run Maven</span>
<svg style="left:543.5px;top:481px;" width="7" height="10" viewBox="0 0 7 10"><path d="M0.800 0.800L5.200 4.800L0.800 8.800" fill="none" stroke="#a6a8aa" stroke-width="1.200"/></svg>
<span style="left:236.5px;top:495.5px;font-size:18px;font-weight:bold;font-style:italic;color:#3592c4;line-height:20px;-webkit-text-stroke:0.5px #3592c4;">m</span>
<svg style="left:244px;top:505px;" width="9" height="10" viewBox="0 0 9 10"><rect x="0" y="0" width="9" height="10" fill="#3c3f41"/><ellipse cx="4.500" cy="6" rx="2.600" ry="3.300" fill="#afb1b3"/><circle cx="4.500" cy="2.300" r="1.500" fill="#afb1b3"/><path d="M0.500 4h8M0.500 6.500h8M1 9l7 0" stroke="#afb1b3" stroke-width="0.800"/></svg>
<span style="left:258.2px;top:497.6px;font-size:13px;color:#bbbbbb;letter-spacing:0.124px;">Debug Maven</span>
<svg style="left:543.5px;top:502px;" width="7" height="10" viewBox="0 0 7 10"><path d="M0.800 0.800L5.200 4.800L0.800 8.800" fill="none" stroke="#a6a8aa" stroke-width="1.200"/></svg>
<svg style="left:237.5px;top:520.7px;" width="11" height="10" viewBox="0 0 11 10"><rect x="0" y="0" width="10.500" height="9.500" fill="#afb1b3"/><path d="M1.800 2.200L4.300 4.300L1.800 6.400M5 7.200h3" fill="none" stroke="#3c3f41" stroke-width="1.100"/></svg>
<span style="left:244px;top:523.6px;font-size:11.5px;font-weight:bold;font-style:italic;color:#3592c4;line-height:16px;height:16px;">m</span>
<span style="left:258.2px;top:518.6px;font-size:13px;color:#bbbbbb;letter-spacing:0.091px;">Open Terminal at the Current Maven Module Path</span>
<svg style="left:238px;top:541.7px;" width="15" height="14" viewBox="0 0 15 14"><rect x="3" y="0.500" width="8.500" height="5" fill="none" stroke="#5e6062" stroke-width="1"/><rect x="0" y="4" width="15" height="7" fill="#55585a"/><rect x="2.500" y="10" width="10" height="3.500" fill="none" stroke="#5e6062" stroke-width="1"/></svg>
<span style="left:258.2px;top:539.6px;font-size:13px;color:#777777;letter-spacing:0.008px;">Run cmd script</span>
<svg style="left:238px;top:562.7px;" width="15" height="14" viewBox="0 0 15 14"><rect x="3" y="0.500" width="8.500" height="4" fill="none" stroke="#afb1b3" stroke-width="1"/><rect x="0" y="3.500" width="15" height="8" fill="#d8dadc"/><text x="7.500" y="10.200" font-size="6.800" font-weight="bold" text-anchor="middle" fill="#222" font-family="Liberation Mono,monospace" textLength="13" lengthAdjust="spacingAndGlyphs">CMD</text><path d="M3 12.500h9" stroke="#afb1b3" stroke-width="1.200"/></svg>
<span style="left:258.2px;top:560.6px;font-size:13px;color:#bbbbbb;letter-spacing:-0.136px;">Run cmd shell</span>
<div style="left:236.5px;top:585px;width:314.5px;height:1px;background:#515355;"></div>
<span style="left:258.2px;top:590.6px;font-size:13px;color:#bbbbbb;letter-spacing:0.013px;">Build <u>M</u>odule 'ANTLR'</span>
<div style="left:236.5px;top:615px;width:314.5px;height:1px;background:#515355;"></div>
<svg style="left:239.5px;top:624.2px;" width="11" height="11" viewBox="0 0 11 11"><rect x="0.500" y="0.500" width="10" height="10" fill="none" stroke="#afb1b3" stroke-width="1"/><path d="M5.500 0.500v10" stroke="#afb1b3" stroke-width="1"/></svg>
<span style="left:258.2px;top:620.6px;font-size:13px;color:#bbbbbb;letter-spacing:0.032px;">Open in Right Split</span>
<span style="left:487px;top:620.6px;font-size:13px;color:#bbbbbb;letter-spacing:-0.061px;">Shift+Enter</span>
<span style="left:258.2px;top:641.6px;font-size:13px;color:#bbbbbb;letter-spacing:0.078px;">Open In</span>
<svg style="left:543.5px;top:646px;" width="7" height="10" viewBox="0 0 7 10"><path d="M0.800 0.800L5.200 4.800L0.800 8.800" fill="none" stroke="#a6a8aa" stroke-width="1.200"/></svg>
<div style="left:236.5px;top:666px;width:314.5px;height:1px;background:#515355;"></div>
<span style="left:258.2px;top:671.6px;font-size:13px;color:#bbbbbb;letter-spacing:-0.003px;">Local <u>H</u>istory</span>
<svg style="left:543.5px;top:676px;" width="7" height="10" viewBox="0 0 7 10"><path d="M0.800 0.800L5.200 4.800L0.800 8.800" fill="none" stroke="#a6a8aa" stroke-width="1.200"/></svg>
<span style="left:258.2px;top:692.6px;font-size:13px;color:#bbbbbb;letter-spacing:-0.271px;"><u>G</u>it</span>
<svg style="left:543.5px;top:697px;" width="7" height="10" viewBox="0 0 7 10"><path d="M0.800 0.800L5.200 4.800L0.800 8.800" fill="none" stroke="#a6a8aa" stroke-width="1.200"/></svg>
<span style="left:258.2px;top:713.6px;font-size:13px;color:#bbbbbb;letter-spacing:-0.238px;">Repair IDE</span>
<svg style="left:238.5px;top:737.2px;" width="14" height="14" viewBox="0 0 14 14"><path d="M12 5.200A5.300 5.300 0 0 0 2.300 4.500M2 8.800A5.300 5.300 0 0 0 11.700 9.500" fill="none" stroke="#afb1b3" stroke-width="1.700"/><path d="M0.500 1.500v4.500h4.500zM13.500 12.500v-4.500h-4.500z" fill="#afb1b3"/></svg>
<span style="left:258.2px;top:734.6px;font-size:13px;color:#bbbbbb;letter-spacing:0.126px;">Reload from Disk</span>
<div style="left:236.5px;top:759px;width:314.5px;height:1px;background:#515355;"></div>
<svg style="left:238px;top:767.2px;" width="15" height="14" viewBox="0 0 15 14"><path d="M8.500 5.500L14 0.800M8.500 5.500v-4M8.500 5.500h4M6 8.500L0.800 13.200M6 8.500v4M6 8.500h-4" fill="none" stroke="#3592c4" stroke-width="1.700"/></svg>
<span style="left:258.2px;top:764.6px;font-size:13px;color:#bbbbbb;letter-spacing:-0.074px;">Compare With...</span>
<span style="left:513.5px;top:764.6px;font-size:13px;color:#bbbbbb;letter-spacing:0.050px;">Ctrl+D</span>
<span style="left:258.2px;top:785.6px;font-size:13px;color:#bbbbbb;letter-spacing:0.020px;">Co<u>m</u>pare File with Editor</span>
<div style="left:236.5px;top:810px;width:314.5px;height:1px;background:#515355;"></div>
<span style="left:258.2px;top:815.6px;font-size:13px;color:#bbbbbb;letter-spacing:-0.171px;">Generate ANTLR Recognizer</span>
<span style="left:479.5px;top:815.6px;font-size:13px;color:#bbbbbb;letter-spacing:-0.002px;">Ctrl+Shift+G</span>
<span style="left:258.2px;top:836.6px;font-size:13px;color:#bbbbbb;letter-spacing:-0.234px;">Configure ANTLR...</span>
<div style="left:236.5px;top:861px;width:314.5px;height:1px;background:#515355;"></div>
<svg style="left:420px;top:818px;" width="40" height="32" viewBox="420 818 40 32"><path d="M424.600 821.500L439.400 823.100L435.600 825.500L453.800 845.800L430.800 832.300L429.400 835.100z" fill="#ff1a0e"/></svg>
<svg style="left:370px;top:836px;" width="34" height="18" viewBox="370 836 34 18"><path d="M372.700 844.400L383.400 839.600L381.300 842.700L399.100 848.200L398.500 849.100L380.600 849.300L381.500 851.600z" fill="#ff1a0e"/></svg>
<svg style="left:938px;top:826px;" width="50" height="24" viewBox="938 826 50 24"><path d="M941.700 841.200L971.200 833.800L968.200 830L983.600 836.400L969.800 846.400L972.200 842.200L942 842.300z" fill="#ff1a0e"/></svg>
</body></html>
